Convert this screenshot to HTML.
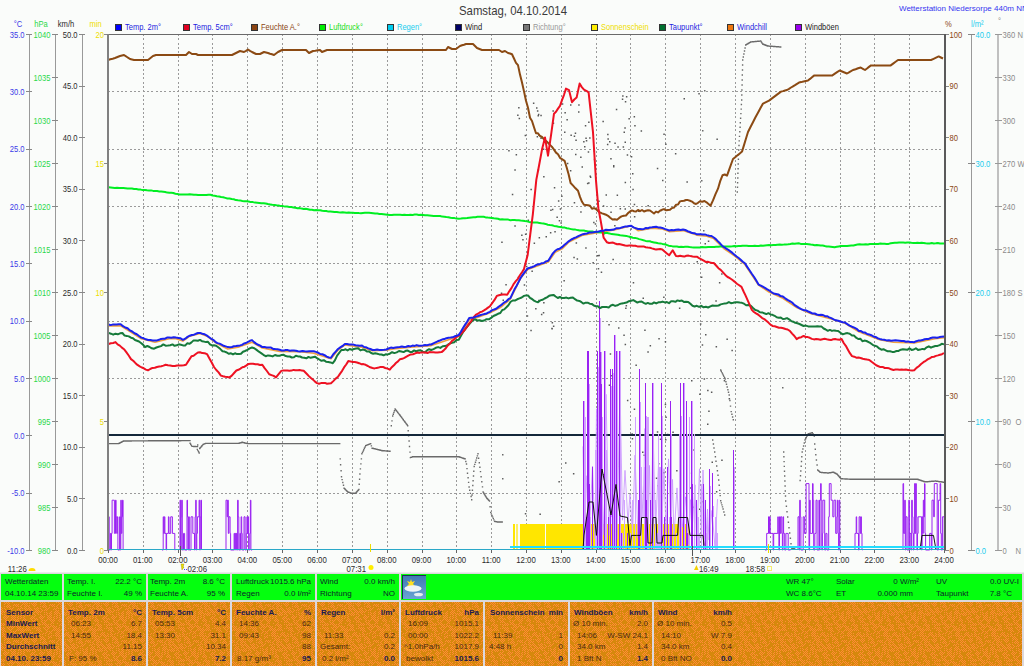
<!DOCTYPE html><html><head><meta charset="utf-8"><style>html,body{margin:0;padding:0;background:#fafcfa;overflow:hidden}svg{display:block}text{font-family:"Liberation Sans",sans-serif}</style></head><body>
<svg width="1024" height="666" viewBox="0 0 1024 666">
<rect x="0" y="0" width="1024" height="666" fill="#fafcfa"/>
<text transform="translate(513.0,15.0) scale(0.91,1)" font-size="12.5" fill="#3a3a3a" text-anchor="middle">Samstag, 04.10.2014</text>
<text x="899.0" y="11.0" font-size="8" fill="#3535f0" text-anchor="start">Wetterstation Niedersorpe 440m NN</text>
<rect x="115.5" y="24.5" width="6" height="6" fill="#0000ff" stroke="#333" stroke-width="1" shape-rendering="crispEdges"/>
<text transform="translate(125.0,29.8) scale(0.835,1)" font-size="9" fill="#1c1ce0" text-anchor="start">Temp. 2m°</text>
<rect x="183.5" y="24.5" width="6" height="6" fill="#e00020" stroke="#333" stroke-width="1" shape-rendering="crispEdges"/>
<text transform="translate(193.0,29.8) scale(0.835,1)" font-size="9" fill="#1c1ce0" text-anchor="start">Temp. 5cm°</text>
<rect x="251.5" y="24.5" width="6" height="6" fill="#8b4513" stroke="#333" stroke-width="1" shape-rendering="crispEdges"/>
<text transform="translate(261.0,29.8) scale(0.835,1)" font-size="9" fill="#8b4513" text-anchor="start">Feuchte A.°</text>
<rect x="319.5" y="24.5" width="6" height="6" fill="#00ee00" stroke="#333" stroke-width="1" shape-rendering="crispEdges"/>
<text transform="translate(329.0,29.8) scale(0.835,1)" font-size="9" fill="#22dd22" text-anchor="start">Luftdruck°</text>
<rect x="387.5" y="24.5" width="6" height="6" fill="#00ccee" stroke="#333" stroke-width="1" shape-rendering="crispEdges"/>
<text transform="translate(397.0,29.8) scale(0.835,1)" font-size="9" fill="#22ccee" text-anchor="start">Regen°</text>
<rect x="455.5" y="24.5" width="6" height="6" fill="#000066" stroke="#333" stroke-width="1" shape-rendering="crispEdges"/>
<text transform="translate(465.0,29.8) scale(0.835,1)" font-size="9" fill="#222" text-anchor="start">Wind</text>
<rect x="523.5" y="24.5" width="6" height="6" fill="#777" stroke="#333" stroke-width="1" shape-rendering="crispEdges"/>
<text transform="translate(533.0,29.8) scale(0.835,1)" font-size="9" fill="#999" text-anchor="start">Richtung°</text>
<rect x="591.5" y="24.5" width="6" height="6" fill="#ffee00" stroke="#333" stroke-width="1" shape-rendering="crispEdges"/>
<text transform="translate(601.0,29.8) scale(0.835,1)" font-size="9" fill="#eedd00" text-anchor="start">Sonnenschein</text>
<rect x="659.5" y="24.5" width="6" height="6" fill="#007030" stroke="#333" stroke-width="1" shape-rendering="crispEdges"/>
<text transform="translate(669.0,29.8) scale(0.835,1)" font-size="9" fill="#1c1ce0" text-anchor="start">Taupunkt°</text>
<rect x="727.5" y="24.5" width="6" height="6" fill="#ee7711" stroke="#333" stroke-width="1" shape-rendering="crispEdges"/>
<text transform="translate(737.0,29.8) scale(0.835,1)" font-size="9" fill="#1c1ce0" text-anchor="start">Windchill</text>
<rect x="795.5" y="24.5" width="6" height="6" fill="#9900ee" stroke="#333" stroke-width="1" shape-rendering="crispEdges"/>
<text transform="translate(805.0,29.8) scale(0.835,1)" font-size="9" fill="#222" text-anchor="start">Windböen</text>
<line x1="29.5" y1="34" x2="29.5" y2="550" stroke="#999" stroke-width="1" shape-rendering="crispEdges"/>
<line x1="26" y1="34.5" x2="32" y2="34.5" stroke="#888" stroke-width="1" shape-rendering="crispEdges"/>
<text transform="translate(24.5,37.6) scale(0.8,1)" font-size="9.5" fill="#3a3ae8" text-anchor="end">35.0</text>
<line x1="26" y1="91.5" x2="32" y2="91.5" stroke="#888" stroke-width="1" shape-rendering="crispEdges"/>
<text transform="translate(24.5,94.9) scale(0.8,1)" font-size="9.5" fill="#3a3ae8" text-anchor="end">30.0</text>
<line x1="26" y1="149.5" x2="32" y2="149.5" stroke="#888" stroke-width="1" shape-rendering="crispEdges"/>
<text transform="translate(24.5,152.3) scale(0.8,1)" font-size="9.5" fill="#3a3ae8" text-anchor="end">25.0</text>
<line x1="26" y1="206.5" x2="32" y2="206.5" stroke="#888" stroke-width="1" shape-rendering="crispEdges"/>
<text transform="translate(24.5,209.6) scale(0.8,1)" font-size="9.5" fill="#3a3ae8" text-anchor="end">20.0</text>
<line x1="26" y1="263.5" x2="32" y2="263.5" stroke="#888" stroke-width="1" shape-rendering="crispEdges"/>
<text transform="translate(24.5,266.9) scale(0.8,1)" font-size="9.5" fill="#3a3ae8" text-anchor="end">15.0</text>
<line x1="26" y1="321.5" x2="32" y2="321.5" stroke="#888" stroke-width="1" shape-rendering="crispEdges"/>
<text transform="translate(24.5,324.3) scale(0.8,1)" font-size="9.5" fill="#3a3ae8" text-anchor="end">10.0</text>
<line x1="26" y1="378.5" x2="32" y2="378.5" stroke="#888" stroke-width="1" shape-rendering="crispEdges"/>
<text transform="translate(24.5,381.6) scale(0.8,1)" font-size="9.5" fill="#3a3ae8" text-anchor="end">5.0</text>
<line x1="26" y1="435.5" x2="32" y2="435.5" stroke="#888" stroke-width="1" shape-rendering="crispEdges"/>
<text transform="translate(24.5,438.9) scale(0.8,1)" font-size="9.5" fill="#3a3ae8" text-anchor="end">0.0</text>
<line x1="26" y1="493.5" x2="32" y2="493.5" stroke="#888" stroke-width="1" shape-rendering="crispEdges"/>
<text transform="translate(24.5,496.3) scale(0.8,1)" font-size="9.5" fill="#3a3ae8" text-anchor="end">-5.0</text>
<line x1="26" y1="550.5" x2="32" y2="550.5" stroke="#888" stroke-width="1" shape-rendering="crispEdges"/>
<text transform="translate(24.5,553.6) scale(0.8,1)" font-size="9.5" fill="#3a3ae8" text-anchor="end">-10.0</text>
<line x1="55.5" y1="34" x2="55.5" y2="550" stroke="#999" stroke-width="1" shape-rendering="crispEdges"/>
<line x1="52" y1="34.5" x2="58" y2="34.5" stroke="#888" stroke-width="1" shape-rendering="crispEdges"/>
<text transform="translate(50.5,37.6) scale(0.8,1)" font-size="9.5" fill="#2ad84a" text-anchor="end">1040</text>
<line x1="52" y1="77.5" x2="58" y2="77.5" stroke="#888" stroke-width="1" shape-rendering="crispEdges"/>
<text transform="translate(50.5,80.6) scale(0.8,1)" font-size="9.5" fill="#2ad84a" text-anchor="end">1035</text>
<line x1="52" y1="120.5" x2="58" y2="120.5" stroke="#888" stroke-width="1" shape-rendering="crispEdges"/>
<text transform="translate(50.5,123.6) scale(0.8,1)" font-size="9.5" fill="#2ad84a" text-anchor="end">1030</text>
<line x1="52" y1="163.5" x2="58" y2="163.5" stroke="#888" stroke-width="1" shape-rendering="crispEdges"/>
<text transform="translate(50.5,166.6) scale(0.8,1)" font-size="9.5" fill="#2ad84a" text-anchor="end">1025</text>
<line x1="52" y1="206.5" x2="58" y2="206.5" stroke="#888" stroke-width="1" shape-rendering="crispEdges"/>
<text transform="translate(50.5,209.6) scale(0.8,1)" font-size="9.5" fill="#2ad84a" text-anchor="end">1020</text>
<line x1="52" y1="249.5" x2="58" y2="249.5" stroke="#888" stroke-width="1" shape-rendering="crispEdges"/>
<text transform="translate(50.5,252.6) scale(0.8,1)" font-size="9.5" fill="#2ad84a" text-anchor="end">1015</text>
<line x1="52" y1="292.5" x2="58" y2="292.5" stroke="#888" stroke-width="1" shape-rendering="crispEdges"/>
<text transform="translate(50.5,295.6) scale(0.8,1)" font-size="9.5" fill="#2ad84a" text-anchor="end">1010</text>
<line x1="52" y1="335.5" x2="58" y2="335.5" stroke="#888" stroke-width="1" shape-rendering="crispEdges"/>
<text transform="translate(50.5,338.6) scale(0.8,1)" font-size="9.5" fill="#2ad84a" text-anchor="end">1005</text>
<line x1="52" y1="378.5" x2="58" y2="378.5" stroke="#888" stroke-width="1" shape-rendering="crispEdges"/>
<text transform="translate(50.5,381.6) scale(0.8,1)" font-size="9.5" fill="#2ad84a" text-anchor="end">1000</text>
<line x1="52" y1="421.5" x2="58" y2="421.5" stroke="#888" stroke-width="1" shape-rendering="crispEdges"/>
<text transform="translate(50.5,424.6) scale(0.8,1)" font-size="9.5" fill="#2ad84a" text-anchor="end">995</text>
<line x1="52" y1="464.5" x2="58" y2="464.5" stroke="#888" stroke-width="1" shape-rendering="crispEdges"/>
<text transform="translate(50.5,467.6) scale(0.8,1)" font-size="9.5" fill="#2ad84a" text-anchor="end">990</text>
<line x1="52" y1="507.5" x2="58" y2="507.5" stroke="#888" stroke-width="1" shape-rendering="crispEdges"/>
<text transform="translate(50.5,510.6) scale(0.8,1)" font-size="9.5" fill="#2ad84a" text-anchor="end">985</text>
<line x1="52" y1="550.5" x2="58" y2="550.5" stroke="#888" stroke-width="1" shape-rendering="crispEdges"/>
<text transform="translate(50.5,553.6) scale(0.8,1)" font-size="9.5" fill="#2ad84a" text-anchor="end">980</text>
<line x1="82.5" y1="34" x2="82.5" y2="550" stroke="#999" stroke-width="1" shape-rendering="crispEdges"/>
<line x1="79" y1="34.5" x2="85" y2="34.5" stroke="#888" stroke-width="1" shape-rendering="crispEdges"/>
<text transform="translate(77.5,37.6) scale(0.8,1)" font-size="9.5" fill="#2a2a2a" text-anchor="end">50.0</text>
<line x1="79" y1="86.5" x2="85" y2="86.5" stroke="#888" stroke-width="1" shape-rendering="crispEdges"/>
<text transform="translate(77.5,89.2) scale(0.8,1)" font-size="9.5" fill="#2a2a2a" text-anchor="end">45.0</text>
<line x1="79" y1="137.5" x2="85" y2="137.5" stroke="#888" stroke-width="1" shape-rendering="crispEdges"/>
<text transform="translate(77.5,140.8) scale(0.8,1)" font-size="9.5" fill="#2a2a2a" text-anchor="end">40.0</text>
<line x1="79" y1="189.5" x2="85" y2="189.5" stroke="#888" stroke-width="1" shape-rendering="crispEdges"/>
<text transform="translate(77.5,192.4) scale(0.8,1)" font-size="9.5" fill="#2a2a2a" text-anchor="end">35.0</text>
<line x1="79" y1="240.5" x2="85" y2="240.5" stroke="#888" stroke-width="1" shape-rendering="crispEdges"/>
<text transform="translate(77.5,244.0) scale(0.8,1)" font-size="9.5" fill="#2a2a2a" text-anchor="end">30.0</text>
<line x1="79" y1="292.5" x2="85" y2="292.5" stroke="#888" stroke-width="1" shape-rendering="crispEdges"/>
<text transform="translate(77.5,295.6) scale(0.8,1)" font-size="9.5" fill="#2a2a2a" text-anchor="end">25.0</text>
<line x1="79" y1="344.5" x2="85" y2="344.5" stroke="#888" stroke-width="1" shape-rendering="crispEdges"/>
<text transform="translate(77.5,347.2) scale(0.8,1)" font-size="9.5" fill="#2a2a2a" text-anchor="end">20.0</text>
<line x1="79" y1="395.5" x2="85" y2="395.5" stroke="#888" stroke-width="1" shape-rendering="crispEdges"/>
<text transform="translate(77.5,398.8) scale(0.8,1)" font-size="9.5" fill="#2a2a2a" text-anchor="end">15.0</text>
<line x1="79" y1="447.5" x2="85" y2="447.5" stroke="#888" stroke-width="1" shape-rendering="crispEdges"/>
<text transform="translate(77.5,450.4) scale(0.8,1)" font-size="9.5" fill="#2a2a2a" text-anchor="end">10.0</text>
<line x1="79" y1="498.5" x2="85" y2="498.5" stroke="#888" stroke-width="1" shape-rendering="crispEdges"/>
<text transform="translate(77.5,502.0) scale(0.8,1)" font-size="9.5" fill="#2a2a2a" text-anchor="end">5.0</text>
<line x1="79" y1="550.5" x2="85" y2="550.5" stroke="#888" stroke-width="1" shape-rendering="crispEdges"/>
<text transform="translate(77.5,553.6) scale(0.8,1)" font-size="9.5" fill="#2a2a2a" text-anchor="end">0.0</text>
<text transform="translate(18.0,27.0) scale(0.8,1)" font-size="9.5" fill="#3a3ae8" text-anchor="middle">°C</text>
<text transform="translate(41.0,27.0) scale(0.8,1)" font-size="9.5" fill="#2ad84a" text-anchor="middle">hPa</text>
<text transform="translate(66.0,27.0) scale(0.8,1)" font-size="9.5" fill="#2a2a2a" text-anchor="middle">km/h</text>
<text transform="translate(95.5,27.0) scale(0.8,1)" font-size="9.5" fill="#eedd00" text-anchor="middle">min</text>
<text transform="translate(104.0,37.6) scale(0.8,1)" font-size="9.5" fill="#eedd00" text-anchor="end">20</text>
<line x1="104" y1="34.5" x2="108" y2="34.5" stroke="#888" stroke-width="1" shape-rendering="crispEdges"/>
<text transform="translate(104.0,166.6) scale(0.8,1)" font-size="9.5" fill="#eedd00" text-anchor="end">15</text>
<line x1="104" y1="163.5" x2="108" y2="163.5" stroke="#888" stroke-width="1" shape-rendering="crispEdges"/>
<text transform="translate(104.0,295.6) scale(0.8,1)" font-size="9.5" fill="#eedd00" text-anchor="end">10</text>
<line x1="104" y1="292.5" x2="108" y2="292.5" stroke="#888" stroke-width="1" shape-rendering="crispEdges"/>
<text transform="translate(104.0,424.6) scale(0.8,1)" font-size="9.5" fill="#eedd00" text-anchor="end">5</text>
<line x1="104" y1="421.5" x2="108" y2="421.5" stroke="#888" stroke-width="1" shape-rendering="crispEdges"/>
<text transform="translate(104.0,553.6) scale(0.8,1)" font-size="9.5" fill="#eedd00" text-anchor="end">0</text>
<line x1="104" y1="550.5" x2="108" y2="550.5" stroke="#888" stroke-width="1" shape-rendering="crispEdges"/>
<line x1="944" y1="34.5" x2="949" y2="34.5" stroke="#888" stroke-width="1" shape-rendering="crispEdges"/>
<text transform="translate(949.5,37.6) scale(0.8,1)" font-size="9.5" fill="#8b4513" text-anchor="start">100</text>
<line x1="944" y1="86.5" x2="949" y2="86.5" stroke="#888" stroke-width="1" shape-rendering="crispEdges"/>
<text transform="translate(949.5,89.2) scale(0.8,1)" font-size="9.5" fill="#8b4513" text-anchor="start">90</text>
<line x1="944" y1="137.5" x2="949" y2="137.5" stroke="#888" stroke-width="1" shape-rendering="crispEdges"/>
<text transform="translate(949.5,140.8) scale(0.8,1)" font-size="9.5" fill="#8b4513" text-anchor="start">80</text>
<line x1="944" y1="189.5" x2="949" y2="189.5" stroke="#888" stroke-width="1" shape-rendering="crispEdges"/>
<text transform="translate(949.5,192.4) scale(0.8,1)" font-size="9.5" fill="#8b4513" text-anchor="start">70</text>
<line x1="944" y1="240.5" x2="949" y2="240.5" stroke="#888" stroke-width="1" shape-rendering="crispEdges"/>
<text transform="translate(949.5,244.0) scale(0.8,1)" font-size="9.5" fill="#8b4513" text-anchor="start">60</text>
<line x1="944" y1="292.5" x2="949" y2="292.5" stroke="#888" stroke-width="1" shape-rendering="crispEdges"/>
<text transform="translate(949.5,295.6) scale(0.8,1)" font-size="9.5" fill="#8b4513" text-anchor="start">50</text>
<line x1="944" y1="344.5" x2="949" y2="344.5" stroke="#888" stroke-width="1" shape-rendering="crispEdges"/>
<text transform="translate(949.5,347.2) scale(0.8,1)" font-size="9.5" fill="#8b4513" text-anchor="start">40</text>
<line x1="944" y1="395.5" x2="949" y2="395.5" stroke="#888" stroke-width="1" shape-rendering="crispEdges"/>
<text transform="translate(949.5,398.8) scale(0.8,1)" font-size="9.5" fill="#8b4513" text-anchor="start">30</text>
<line x1="944" y1="447.5" x2="949" y2="447.5" stroke="#888" stroke-width="1" shape-rendering="crispEdges"/>
<text transform="translate(949.5,450.4) scale(0.8,1)" font-size="9.5" fill="#8b4513" text-anchor="start">20</text>
<line x1="944" y1="498.5" x2="949" y2="498.5" stroke="#888" stroke-width="1" shape-rendering="crispEdges"/>
<text transform="translate(949.5,502.0) scale(0.8,1)" font-size="9.5" fill="#8b4513" text-anchor="start">10</text>
<line x1="944" y1="550.5" x2="949" y2="550.5" stroke="#888" stroke-width="1" shape-rendering="crispEdges"/>
<text transform="translate(949.5,553.6) scale(0.8,1)" font-size="9.5" fill="#8b4513" text-anchor="start">0</text>
<text transform="translate(945.0,27.0) scale(0.8,1)" font-size="9.5" fill="#8b4513" text-anchor="start">%</text>
<line x1="971.5" y1="34" x2="971.5" y2="550" stroke="#999" stroke-width="1" shape-rendering="crispEdges"/>
<line x1="968" y1="34.5" x2="975" y2="34.5" stroke="#888" stroke-width="1" shape-rendering="crispEdges"/>
<text transform="translate(975.5,37.6) scale(0.8,1)" font-size="9.5" fill="#22ccee" text-anchor="start">40.0</text>
<line x1="968" y1="163.5" x2="975" y2="163.5" stroke="#888" stroke-width="1" shape-rendering="crispEdges"/>
<text transform="translate(975.5,166.6) scale(0.8,1)" font-size="9.5" fill="#22ccee" text-anchor="start">30.0</text>
<line x1="968" y1="292.5" x2="975" y2="292.5" stroke="#888" stroke-width="1" shape-rendering="crispEdges"/>
<text transform="translate(975.5,295.6) scale(0.8,1)" font-size="9.5" fill="#22ccee" text-anchor="start">20.0</text>
<line x1="968" y1="421.5" x2="975" y2="421.5" stroke="#888" stroke-width="1" shape-rendering="crispEdges"/>
<text transform="translate(975.5,424.6) scale(0.8,1)" font-size="9.5" fill="#22ccee" text-anchor="start">10.0</text>
<line x1="968" y1="550.5" x2="975" y2="550.5" stroke="#888" stroke-width="1" shape-rendering="crispEdges"/>
<text transform="translate(975.5,553.6) scale(0.8,1)" font-size="9.5" fill="#22ccee" text-anchor="start">0.0</text>
<text transform="translate(971.0,27.0) scale(0.8,1)" font-size="9.5" fill="#22ccee" text-anchor="start">l/m²</text>
<line x1="998" y1="34" x2="998" y2="550" stroke="#c0c0c0" stroke-width="2" shape-rendering="crispEdges"/>
<line x1="995" y1="34.5" x2="1002" y2="34.5" stroke="#999" stroke-width="1" shape-rendering="crispEdges"/>
<text transform="translate(1002.5,37.6) scale(0.8,1)" font-size="9.5" fill="#8a8a8a" text-anchor="start">360</text>
<text transform="translate(1017.5,37.6) scale(0.8,1)" font-size="9.5" fill="#8a8a8a" text-anchor="start">N</text>
<line x1="995" y1="77.5" x2="1002" y2="77.5" stroke="#999" stroke-width="1" shape-rendering="crispEdges"/>
<text transform="translate(1002.5,80.6) scale(0.8,1)" font-size="9.5" fill="#8a8a8a" text-anchor="start">330</text>
<line x1="995" y1="120.5" x2="1002" y2="120.5" stroke="#999" stroke-width="1" shape-rendering="crispEdges"/>
<text transform="translate(1002.5,123.6) scale(0.8,1)" font-size="9.5" fill="#8a8a8a" text-anchor="start">300</text>
<line x1="995" y1="163.5" x2="1002" y2="163.5" stroke="#999" stroke-width="1" shape-rendering="crispEdges"/>
<text transform="translate(1002.5,166.6) scale(0.8,1)" font-size="9.5" fill="#8a8a8a" text-anchor="start">270</text>
<text transform="translate(1017.5,166.6) scale(0.8,1)" font-size="9.5" fill="#8a8a8a" text-anchor="start">W</text>
<line x1="995" y1="206.5" x2="1002" y2="206.5" stroke="#999" stroke-width="1" shape-rendering="crispEdges"/>
<text transform="translate(1002.5,209.6) scale(0.8,1)" font-size="9.5" fill="#8a8a8a" text-anchor="start">240</text>
<line x1="995" y1="249.5" x2="1002" y2="249.5" stroke="#999" stroke-width="1" shape-rendering="crispEdges"/>
<text transform="translate(1002.5,252.6) scale(0.8,1)" font-size="9.5" fill="#8a8a8a" text-anchor="start">210</text>
<line x1="995" y1="292.5" x2="1002" y2="292.5" stroke="#999" stroke-width="1" shape-rendering="crispEdges"/>
<text transform="translate(1002.5,295.6) scale(0.8,1)" font-size="9.5" fill="#8a8a8a" text-anchor="start">180</text>
<text transform="translate(1017.5,295.6) scale(0.8,1)" font-size="9.5" fill="#8a8a8a" text-anchor="start">S</text>
<line x1="995" y1="335.5" x2="1002" y2="335.5" stroke="#999" stroke-width="1" shape-rendering="crispEdges"/>
<text transform="translate(1002.5,338.6) scale(0.8,1)" font-size="9.5" fill="#8a8a8a" text-anchor="start">150</text>
<line x1="995" y1="378.5" x2="1002" y2="378.5" stroke="#999" stroke-width="1" shape-rendering="crispEdges"/>
<text transform="translate(1002.5,381.6) scale(0.8,1)" font-size="9.5" fill="#8a8a8a" text-anchor="start">120</text>
<line x1="995" y1="421.5" x2="1002" y2="421.5" stroke="#999" stroke-width="1" shape-rendering="crispEdges"/>
<text transform="translate(1002.5,424.6) scale(0.8,1)" font-size="9.5" fill="#8a8a8a" text-anchor="start">90</text>
<text transform="translate(1015.5,424.6) scale(0.8,1)" font-size="9.5" fill="#8a8a8a" text-anchor="start">O</text>
<line x1="995" y1="464.5" x2="1002" y2="464.5" stroke="#999" stroke-width="1" shape-rendering="crispEdges"/>
<text transform="translate(1002.5,467.6) scale(0.8,1)" font-size="9.5" fill="#8a8a8a" text-anchor="start">60</text>
<line x1="995" y1="507.5" x2="1002" y2="507.5" stroke="#999" stroke-width="1" shape-rendering="crispEdges"/>
<text transform="translate(1002.5,510.6) scale(0.8,1)" font-size="9.5" fill="#8a8a8a" text-anchor="start">30</text>
<line x1="995" y1="550.5" x2="1002" y2="550.5" stroke="#999" stroke-width="1" shape-rendering="crispEdges"/>
<text transform="translate(1002.5,553.6) scale(0.8,1)" font-size="9.5" fill="#8a8a8a" text-anchor="start">0</text>
<text transform="translate(1015.5,553.6) scale(0.8,1)" font-size="9.5" fill="#8a8a8a" text-anchor="start">N</text>
<text transform="translate(998.0,24.0) scale(0.8,1)" font-size="9.5" fill="#8a8a8a" text-anchor="start">°</text>
<line x1="143.5" y1="34" x2="143.5" y2="550" stroke="#9a9a9a" stroke-width="1" shape-rendering="crispEdges" stroke-dasharray="2,2.33"/>
<line x1="178.5" y1="34" x2="178.5" y2="550" stroke="#9a9a9a" stroke-width="1" shape-rendering="crispEdges" stroke-dasharray="2,2.33"/>
<line x1="212.5" y1="34" x2="212.5" y2="550" stroke="#9a9a9a" stroke-width="1" shape-rendering="crispEdges" stroke-dasharray="2,2.33"/>
<line x1="247.5" y1="34" x2="247.5" y2="550" stroke="#9a9a9a" stroke-width="1" shape-rendering="crispEdges" stroke-dasharray="2,2.33"/>
<line x1="282.5" y1="34" x2="282.5" y2="550" stroke="#9a9a9a" stroke-width="1" shape-rendering="crispEdges" stroke-dasharray="2,2.33"/>
<line x1="317.5" y1="34" x2="317.5" y2="550" stroke="#9a9a9a" stroke-width="1" shape-rendering="crispEdges" stroke-dasharray="2,2.33"/>
<line x1="352.5" y1="34" x2="352.5" y2="550" stroke="#9a9a9a" stroke-width="1" shape-rendering="crispEdges" stroke-dasharray="2,2.33"/>
<line x1="387.5" y1="34" x2="387.5" y2="550" stroke="#9a9a9a" stroke-width="1" shape-rendering="crispEdges" stroke-dasharray="2,2.33"/>
<line x1="422.5" y1="34" x2="422.5" y2="550" stroke="#9a9a9a" stroke-width="1" shape-rendering="crispEdges" stroke-dasharray="2,2.33"/>
<line x1="456.5" y1="34" x2="456.5" y2="550" stroke="#9a9a9a" stroke-width="1" shape-rendering="crispEdges" stroke-dasharray="2,2.33"/>
<line x1="491.5" y1="34" x2="491.5" y2="550" stroke="#9a9a9a" stroke-width="1" shape-rendering="crispEdges" stroke-dasharray="2,2.33"/>
<line x1="526.5" y1="34" x2="526.5" y2="550" stroke="#9a9a9a" stroke-width="1" shape-rendering="crispEdges" stroke-dasharray="2,2.33"/>
<line x1="561.5" y1="34" x2="561.5" y2="550" stroke="#9a9a9a" stroke-width="1" shape-rendering="crispEdges" stroke-dasharray="2,2.33"/>
<line x1="596.5" y1="34" x2="596.5" y2="550" stroke="#9a9a9a" stroke-width="1" shape-rendering="crispEdges" stroke-dasharray="2,2.33"/>
<line x1="630.5" y1="34" x2="630.5" y2="550" stroke="#9a9a9a" stroke-width="1" shape-rendering="crispEdges" stroke-dasharray="2,2.33"/>
<line x1="665.5" y1="34" x2="665.5" y2="550" stroke="#9a9a9a" stroke-width="1" shape-rendering="crispEdges" stroke-dasharray="2,2.33"/>
<line x1="700.5" y1="34" x2="700.5" y2="550" stroke="#9a9a9a" stroke-width="1" shape-rendering="crispEdges" stroke-dasharray="2,2.33"/>
<line x1="735.5" y1="34" x2="735.5" y2="550" stroke="#9a9a9a" stroke-width="1" shape-rendering="crispEdges" stroke-dasharray="2,2.33"/>
<line x1="770.5" y1="34" x2="770.5" y2="550" stroke="#9a9a9a" stroke-width="1" shape-rendering="crispEdges" stroke-dasharray="2,2.33"/>
<line x1="805.5" y1="34" x2="805.5" y2="550" stroke="#9a9a9a" stroke-width="1" shape-rendering="crispEdges" stroke-dasharray="2,2.33"/>
<line x1="840.5" y1="34" x2="840.5" y2="550" stroke="#9a9a9a" stroke-width="1" shape-rendering="crispEdges" stroke-dasharray="2,2.33"/>
<line x1="874.5" y1="34" x2="874.5" y2="550" stroke="#9a9a9a" stroke-width="1" shape-rendering="crispEdges" stroke-dasharray="2,2.33"/>
<line x1="909.5" y1="34" x2="909.5" y2="550" stroke="#9a9a9a" stroke-width="1" shape-rendering="crispEdges" stroke-dasharray="2,2.33"/>
<line x1="108" y1="91.5" x2="944" y2="91.5" stroke="#9a9a9a" stroke-width="1" shape-rendering="crispEdges" stroke-dasharray="2,2.33"/>
<line x1="108" y1="149.5" x2="944" y2="149.5" stroke="#9a9a9a" stroke-width="1" shape-rendering="crispEdges" stroke-dasharray="2,2.33"/>
<line x1="108" y1="206.5" x2="944" y2="206.5" stroke="#9a9a9a" stroke-width="1" shape-rendering="crispEdges" stroke-dasharray="2,2.33"/>
<line x1="108" y1="263.5" x2="944" y2="263.5" stroke="#9a9a9a" stroke-width="1" shape-rendering="crispEdges" stroke-dasharray="2,2.33"/>
<line x1="108" y1="321.5" x2="944" y2="321.5" stroke="#9a9a9a" stroke-width="1" shape-rendering="crispEdges" stroke-dasharray="2,2.33"/>
<line x1="108" y1="378.5" x2="944" y2="378.5" stroke="#9a9a9a" stroke-width="1" shape-rendering="crispEdges" stroke-dasharray="2,2.33"/>
<line x1="108" y1="435.5" x2="944" y2="435.5" stroke="#9a9a9a" stroke-width="1" shape-rendering="crispEdges" stroke-dasharray="2,2.33"/>
<line x1="108" y1="493.5" x2="944" y2="493.5" stroke="#9a9a9a" stroke-width="1" shape-rendering="crispEdges" stroke-dasharray="2,2.33"/>
<line x1="108.5" y1="550" x2="108.5" y2="553" stroke="#666" stroke-width="1" shape-rendering="crispEdges"/>
<text transform="translate(108.0,563.0) scale(0.87,1)" font-size="9" fill="#2a2a2a" text-anchor="middle">00:00</text>
<line x1="143.5" y1="550" x2="143.5" y2="553" stroke="#666" stroke-width="1" shape-rendering="crispEdges"/>
<text transform="translate(142.8,563.0) scale(0.87,1)" font-size="9" fill="#2a2a2a" text-anchor="middle">01:00</text>
<line x1="178.5" y1="550" x2="178.5" y2="553" stroke="#666" stroke-width="1" shape-rendering="crispEdges"/>
<text transform="translate(177.7,563.0) scale(0.87,1)" font-size="9" fill="#2a2a2a" text-anchor="middle">02:00</text>
<line x1="212.5" y1="550" x2="212.5" y2="553" stroke="#666" stroke-width="1" shape-rendering="crispEdges"/>
<text transform="translate(212.5,563.0) scale(0.87,1)" font-size="9" fill="#2a2a2a" text-anchor="middle">03:00</text>
<line x1="247.5" y1="550" x2="247.5" y2="553" stroke="#666" stroke-width="1" shape-rendering="crispEdges"/>
<text transform="translate(247.3,563.0) scale(0.87,1)" font-size="9" fill="#2a2a2a" text-anchor="middle">04:00</text>
<line x1="282.5" y1="550" x2="282.5" y2="553" stroke="#666" stroke-width="1" shape-rendering="crispEdges"/>
<text transform="translate(282.2,563.0) scale(0.87,1)" font-size="9" fill="#2a2a2a" text-anchor="middle">05:00</text>
<line x1="317.5" y1="550" x2="317.5" y2="553" stroke="#666" stroke-width="1" shape-rendering="crispEdges"/>
<text transform="translate(317.0,563.0) scale(0.87,1)" font-size="9" fill="#2a2a2a" text-anchor="middle">06:00</text>
<line x1="352.5" y1="550" x2="352.5" y2="553" stroke="#666" stroke-width="1" shape-rendering="crispEdges"/>
<text transform="translate(351.8,563.0) scale(0.87,1)" font-size="9" fill="#2a2a2a" text-anchor="middle">07:00</text>
<line x1="387.5" y1="550" x2="387.5" y2="553" stroke="#666" stroke-width="1" shape-rendering="crispEdges"/>
<text transform="translate(386.7,563.0) scale(0.87,1)" font-size="9" fill="#2a2a2a" text-anchor="middle">08:00</text>
<line x1="422.5" y1="550" x2="422.5" y2="553" stroke="#666" stroke-width="1" shape-rendering="crispEdges"/>
<text transform="translate(421.5,563.0) scale(0.87,1)" font-size="9" fill="#2a2a2a" text-anchor="middle">09:00</text>
<line x1="456.5" y1="550" x2="456.5" y2="553" stroke="#666" stroke-width="1" shape-rendering="crispEdges"/>
<text transform="translate(456.3,563.0) scale(0.87,1)" font-size="9" fill="#2a2a2a" text-anchor="middle">10:00</text>
<line x1="491.5" y1="550" x2="491.5" y2="553" stroke="#666" stroke-width="1" shape-rendering="crispEdges"/>
<text transform="translate(491.2,563.0) scale(0.87,1)" font-size="9" fill="#2a2a2a" text-anchor="middle">11:00</text>
<line x1="526.5" y1="550" x2="526.5" y2="553" stroke="#666" stroke-width="1" shape-rendering="crispEdges"/>
<text transform="translate(526.0,563.0) scale(0.87,1)" font-size="9" fill="#2a2a2a" text-anchor="middle">12:00</text>
<line x1="561.5" y1="550" x2="561.5" y2="553" stroke="#666" stroke-width="1" shape-rendering="crispEdges"/>
<text transform="translate(560.8,563.0) scale(0.87,1)" font-size="9" fill="#2a2a2a" text-anchor="middle">13:00</text>
<line x1="596.5" y1="550" x2="596.5" y2="553" stroke="#666" stroke-width="1" shape-rendering="crispEdges"/>
<text transform="translate(595.7,563.0) scale(0.87,1)" font-size="9" fill="#2a2a2a" text-anchor="middle">14:00</text>
<line x1="630.5" y1="550" x2="630.5" y2="553" stroke="#666" stroke-width="1" shape-rendering="crispEdges"/>
<text transform="translate(630.5,563.0) scale(0.87,1)" font-size="9" fill="#2a2a2a" text-anchor="middle">15:00</text>
<line x1="665.5" y1="550" x2="665.5" y2="553" stroke="#666" stroke-width="1" shape-rendering="crispEdges"/>
<text transform="translate(665.3,563.0) scale(0.87,1)" font-size="9" fill="#2a2a2a" text-anchor="middle">16:00</text>
<line x1="700.5" y1="550" x2="700.5" y2="553" stroke="#666" stroke-width="1" shape-rendering="crispEdges"/>
<text transform="translate(700.2,563.0) scale(0.87,1)" font-size="9" fill="#2a2a2a" text-anchor="middle">17:00</text>
<line x1="735.5" y1="550" x2="735.5" y2="553" stroke="#666" stroke-width="1" shape-rendering="crispEdges"/>
<text transform="translate(735.0,563.0) scale(0.87,1)" font-size="9" fill="#2a2a2a" text-anchor="middle">18:00</text>
<line x1="770.5" y1="550" x2="770.5" y2="553" stroke="#666" stroke-width="1" shape-rendering="crispEdges"/>
<text transform="translate(769.8,563.0) scale(0.87,1)" font-size="9" fill="#2a2a2a" text-anchor="middle">19:00</text>
<line x1="805.5" y1="550" x2="805.5" y2="553" stroke="#666" stroke-width="1" shape-rendering="crispEdges"/>
<text transform="translate(804.7,563.0) scale(0.87,1)" font-size="9" fill="#2a2a2a" text-anchor="middle">20:00</text>
<line x1="840.5" y1="550" x2="840.5" y2="553" stroke="#666" stroke-width="1" shape-rendering="crispEdges"/>
<text transform="translate(839.5,563.0) scale(0.87,1)" font-size="9" fill="#2a2a2a" text-anchor="middle">21:00</text>
<line x1="874.5" y1="550" x2="874.5" y2="553" stroke="#666" stroke-width="1" shape-rendering="crispEdges"/>
<text transform="translate(874.3,563.0) scale(0.87,1)" font-size="9" fill="#2a2a2a" text-anchor="middle">22:00</text>
<line x1="909.5" y1="550" x2="909.5" y2="553" stroke="#666" stroke-width="1" shape-rendering="crispEdges"/>
<text transform="translate(909.2,563.0) scale(0.87,1)" font-size="9" fill="#2a2a2a" text-anchor="middle">23:00</text>
<line x1="944.5" y1="550" x2="944.5" y2="553" stroke="#666" stroke-width="1" shape-rendering="crispEdges"/>
<text transform="translate(944.0,563.0) scale(0.87,1)" font-size="9" fill="#2a2a2a" text-anchor="middle">24:00</text>
<g fill="#ffe600" shape-rendering="crispEdges">
<rect x="513" y="524" width="2" height="26"/><rect x="516" y="524" width="2" height="26" opacity="0.6"/>
<rect x="520" y="524" width="25" height="26"/><rect x="546" y="524" width="144" height="26"/>
</g>
<path d="M502,454h1.5v1.5h-1.5zM502,478h1.5v1.5h-1.5zM782,387h1.5v1.5h-1.5zM704,90h1.5v1.5h-1.5zM702,130h1.5v1.5h-1.5zM701,180h1.5v1.5h-1.5zM703,230h1.5v1.5h-1.5zM108.0,442.9h1.4v1.4h-1.4zM108.6,442.9h1.4v1.4h-1.4zM109.2,442.9h1.4v1.4h-1.4zM109.7,442.9h1.4v1.4h-1.4zM110.3,442.9h1.4v1.4h-1.4zM110.9,442.9h1.4v1.4h-1.4zM111.5,442.9h1.4v1.4h-1.4zM112.1,442.9h1.4v1.4h-1.4zM112.7,442.9h1.4v1.4h-1.4zM113.2,442.9h1.4v1.4h-1.4zM113.8,442.9h1.4v1.4h-1.4zM114.4,442.9h1.4v1.4h-1.4zM115.0,442.9h1.4v1.4h-1.4zM115.6,442.9h1.4v1.4h-1.4zM116.2,442.9h1.4v1.4h-1.4zM116.7,442.9h1.4v1.4h-1.4zM117.3,442.9h1.4v1.4h-1.4zM117.9,442.9h1.4v1.4h-1.4zM118.5,442.6h1.4v1.4h-1.4zM119.2,442.3h1.4v1.4h-1.4zM119.8,441.9h1.4v1.4h-1.4zM120.5,441.6h1.4v1.4h-1.4zM121.1,441.3h1.4v1.4h-1.4zM121.7,440.9h1.4v1.4h-1.4zM122.4,440.6h1.4v1.4h-1.4zM123.0,440.3h1.4v1.4h-1.4zM123.6,440.3h1.4v1.4h-1.4zM124.2,440.3h1.4v1.4h-1.4zM124.7,440.3h1.4v1.4h-1.4zM125.3,440.3h1.4v1.4h-1.4zM125.9,440.3h1.4v1.4h-1.4zM126.5,440.3h1.4v1.4h-1.4zM127.1,440.3h1.4v1.4h-1.4zM127.6,440.3h1.4v1.4h-1.4zM128.2,440.3h1.4v1.4h-1.4zM128.8,440.3h1.4v1.4h-1.4zM129.4,440.3h1.4v1.4h-1.4zM130.0,440.3h1.4v1.4h-1.4zM130.5,440.3h1.4v1.4h-1.4zM131.1,440.2h1.4v1.4h-1.4zM131.7,440.2h1.4v1.4h-1.4zM132.3,440.2h1.4v1.4h-1.4zM132.9,440.2h1.4v1.4h-1.4zM133.4,440.2h1.4v1.4h-1.4zM134.0,440.2h1.4v1.4h-1.4zM134.6,440.2h1.4v1.4h-1.4zM135.2,440.2h1.4v1.4h-1.4zM135.8,440.2h1.4v1.4h-1.4zM136.3,440.2h1.4v1.4h-1.4zM136.9,440.2h1.4v1.4h-1.4zM137.5,440.2h1.4v1.4h-1.4zM138.1,440.2h1.4v1.4h-1.4zM138.7,440.2h1.4v1.4h-1.4zM139.2,440.2h1.4v1.4h-1.4zM139.8,440.2h1.4v1.4h-1.4zM140.4,440.2h1.4v1.4h-1.4zM141.0,440.2h1.4v1.4h-1.4zM141.6,440.2h1.4v1.4h-1.4zM142.2,440.2h1.4v1.4h-1.4zM142.7,440.2h1.4v1.4h-1.4zM143.3,440.2h1.4v1.4h-1.4zM143.9,440.2h1.4v1.4h-1.4zM144.5,440.2h1.4v1.4h-1.4zM145.1,440.2h1.4v1.4h-1.4zM145.6,440.2h1.4v1.4h-1.4zM146.2,440.2h1.4v1.4h-1.4zM146.8,440.2h1.4v1.4h-1.4zM147.4,440.2h1.4v1.4h-1.4zM148.0,440.1h1.4v1.4h-1.4zM148.5,440.1h1.4v1.4h-1.4zM149.1,440.1h1.4v1.4h-1.4zM149.7,440.1h1.4v1.4h-1.4zM150.3,440.1h1.4v1.4h-1.4zM150.9,440.1h1.4v1.4h-1.4zM151.4,440.1h1.4v1.4h-1.4zM152.0,440.1h1.4v1.4h-1.4zM152.6,440.1h1.4v1.4h-1.4zM153.2,440.1h1.4v1.4h-1.4zM153.8,440.1h1.4v1.4h-1.4zM154.3,440.1h1.4v1.4h-1.4zM154.9,440.1h1.4v1.4h-1.4zM155.5,440.1h1.4v1.4h-1.4zM156.1,440.1h1.4v1.4h-1.4zM156.7,440.1h1.4v1.4h-1.4zM157.2,440.1h1.4v1.4h-1.4zM157.8,440.1h1.4v1.4h-1.4zM158.4,440.1h1.4v1.4h-1.4zM159.0,440.1h1.4v1.4h-1.4zM159.6,440.1h1.4v1.4h-1.4zM160.1,440.1h1.4v1.4h-1.4zM160.7,440.1h1.4v1.4h-1.4zM161.3,440.1h1.4v1.4h-1.4zM161.9,440.1h1.4v1.4h-1.4zM162.5,440.1h1.4v1.4h-1.4zM163.0,440.1h1.4v1.4h-1.4zM163.6,440.1h1.4v1.4h-1.4zM164.2,440.0h1.4v1.4h-1.4zM164.8,440.0h1.4v1.4h-1.4zM165.4,440.0h1.4v1.4h-1.4zM165.9,440.0h1.4v1.4h-1.4zM166.5,440.0h1.4v1.4h-1.4zM167.1,440.0h1.4v1.4h-1.4zM167.7,440.0h1.4v1.4h-1.4zM168.3,440.0h1.4v1.4h-1.4zM168.8,440.0h1.4v1.4h-1.4zM169.4,440.0h1.4v1.4h-1.4zM170.0,440.0h1.4v1.4h-1.4zM170.6,440.0h1.4v1.4h-1.4zM171.2,440.0h1.4v1.4h-1.4zM171.8,440.0h1.4v1.4h-1.4zM172.3,440.0h1.4v1.4h-1.4zM172.9,440.0h1.4v1.4h-1.4zM173.5,440.0h1.4v1.4h-1.4zM174.1,440.0h1.4v1.4h-1.4zM174.7,440.0h1.4v1.4h-1.4zM175.2,440.0h1.4v1.4h-1.4zM175.8,440.0h1.4v1.4h-1.4zM176.4,440.0h1.4v1.4h-1.4zM177.0,440.0h1.4v1.4h-1.4zM177.6,440.0h1.4v1.4h-1.4zM178.1,440.0h1.4v1.4h-1.4zM178.7,440.0h1.4v1.4h-1.4zM179.3,440.0h1.4v1.4h-1.4zM179.9,440.0h1.4v1.4h-1.4zM180.5,439.9h1.4v1.4h-1.4zM181.0,439.9h1.4v1.4h-1.4zM181.6,439.9h1.4v1.4h-1.4zM182.2,439.9h1.4v1.4h-1.4zM182.8,439.9h1.4v1.4h-1.4zM183.4,439.9h1.4v1.4h-1.4zM183.9,439.9h1.4v1.4h-1.4zM184.5,439.9h1.4v1.4h-1.4zM185.1,439.9h1.4v1.4h-1.4zM185.7,439.9h1.4v1.4h-1.4zM186.3,439.9h1.4v1.4h-1.4zM186.8,439.9h1.4v1.4h-1.4zM187.4,439.9h1.4v1.4h-1.4zM188.0,439.9h1.4v1.4h-1.4zM188.7,439.9h1.4v1.4h-1.4zM189.3,439.9h1.4v1.4h-1.4zM189.4,442.6h1.4v1.4h-1.4zM190.0,443.6h1.4v1.4h-1.4zM190.7,444.7h1.4v1.4h-1.4zM191.3,445.7h1.4v1.4h-1.4zM191.9,445.7h1.4v1.4h-1.4zM192.5,445.7h1.4v1.4h-1.4zM193.1,445.8h1.4v1.4h-1.4zM193.7,445.8h1.4v1.4h-1.4zM194.4,445.8h1.4v1.4h-1.4zM195.0,445.8h1.4v1.4h-1.4zM195.6,445.9h1.4v1.4h-1.4zM196.2,445.9h1.4v1.4h-1.4zM196.8,445.9h1.4v1.4h-1.4zM197.0,444.3h1.4v1.4h-1.4zM196.6,448.7h1.4v1.4h-1.4zM197.2,449.9h1.4v1.4h-1.4zM197.9,451.1h1.4v1.4h-1.4zM198.5,452.3h1.4v1.4h-1.4zM199.0,447.8h1.4v1.4h-1.4zM199.6,447.1h1.4v1.4h-1.4zM200.2,446.4h1.4v1.4h-1.4zM200.8,445.8h1.4v1.4h-1.4zM201.3,445.1h1.4v1.4h-1.4zM201.9,444.4h1.4v1.4h-1.4zM202.5,443.7h1.4v1.4h-1.4zM203.1,443.4h1.4v1.4h-1.4zM203.8,443.2h1.4v1.4h-1.4zM204.4,442.9h1.4v1.4h-1.4zM205.0,442.7h1.4v1.4h-1.4zM205.6,442.7h1.4v1.4h-1.4zM206.2,442.7h1.4v1.4h-1.4zM206.8,442.7h1.4v1.4h-1.4zM207.3,442.7h1.4v1.4h-1.4zM207.9,442.7h1.4v1.4h-1.4zM208.5,442.7h1.4v1.4h-1.4zM209.1,442.7h1.4v1.4h-1.4zM209.7,442.7h1.4v1.4h-1.4zM210.3,442.7h1.4v1.4h-1.4zM210.9,442.7h1.4v1.4h-1.4zM211.4,442.7h1.4v1.4h-1.4zM212.0,442.7h1.4v1.4h-1.4zM212.6,442.7h1.4v1.4h-1.4zM213.2,442.7h1.4v1.4h-1.4zM213.8,442.7h1.4v1.4h-1.4zM214.4,442.7h1.4v1.4h-1.4zM215.0,442.7h1.4v1.4h-1.4zM215.5,442.7h1.4v1.4h-1.4zM216.1,442.7h1.4v1.4h-1.4zM216.7,442.7h1.4v1.4h-1.4zM217.3,442.7h1.4v1.4h-1.4zM217.9,442.7h1.4v1.4h-1.4zM218.5,442.7h1.4v1.4h-1.4zM219.1,442.7h1.4v1.4h-1.4zM219.6,442.7h1.4v1.4h-1.4zM220.2,442.7h1.4v1.4h-1.4zM220.8,442.7h1.4v1.4h-1.4zM221.4,442.7h1.4v1.4h-1.4zM222.0,442.7h1.4v1.4h-1.4zM222.6,442.7h1.4v1.4h-1.4zM223.2,442.7h1.4v1.4h-1.4zM223.7,442.7h1.4v1.4h-1.4zM224.3,442.7h1.4v1.4h-1.4zM224.9,442.7h1.4v1.4h-1.4zM225.5,442.7h1.4v1.4h-1.4zM226.1,442.7h1.4v1.4h-1.4zM226.7,442.7h1.4v1.4h-1.4zM227.3,442.7h1.4v1.4h-1.4zM227.8,442.7h1.4v1.4h-1.4zM228.4,442.7h1.4v1.4h-1.4zM229.0,442.7h1.4v1.4h-1.4zM229.6,442.7h1.4v1.4h-1.4zM230.2,442.7h1.4v1.4h-1.4zM230.8,442.7h1.4v1.4h-1.4zM231.4,442.7h1.4v1.4h-1.4zM231.9,442.7h1.4v1.4h-1.4zM232.5,442.7h1.4v1.4h-1.4zM233.1,442.7h1.4v1.4h-1.4zM233.7,442.7h1.4v1.4h-1.4zM234.3,442.7h1.4v1.4h-1.4zM234.9,442.7h1.4v1.4h-1.4zM235.5,442.7h1.4v1.4h-1.4zM236.0,442.7h1.4v1.4h-1.4zM236.6,442.7h1.4v1.4h-1.4zM237.2,442.7h1.4v1.4h-1.4zM237.8,442.7h1.4v1.4h-1.4zM238.4,442.5h1.4v1.4h-1.4zM239.1,442.3h1.4v1.4h-1.4zM239.7,442.2h1.4v1.4h-1.4zM240.3,442.0h1.4v1.4h-1.4zM241.0,441.8h1.4v1.4h-1.4zM241.6,441.6h1.4v1.4h-1.4zM242.2,441.8h1.4v1.4h-1.4zM242.9,441.9h1.4v1.4h-1.4zM243.5,442.1h1.4v1.4h-1.4zM244.1,442.3h1.4v1.4h-1.4zM244.8,442.4h1.4v1.4h-1.4zM245.4,442.6h1.4v1.4h-1.4zM246.1,442.7h1.4v1.4h-1.4zM246.7,442.9h1.4v1.4h-1.4zM247.3,442.9h1.4v1.4h-1.4zM247.9,442.9h1.4v1.4h-1.4zM248.4,442.9h1.4v1.4h-1.4zM249.0,442.9h1.4v1.4h-1.4zM249.6,442.9h1.4v1.4h-1.4zM250.2,442.9h1.4v1.4h-1.4zM250.8,442.9h1.4v1.4h-1.4zM251.3,442.9h1.4v1.4h-1.4zM251.9,442.9h1.4v1.4h-1.4zM252.5,442.9h1.4v1.4h-1.4zM253.1,442.9h1.4v1.4h-1.4zM253.7,442.9h1.4v1.4h-1.4zM254.2,442.9h1.4v1.4h-1.4zM254.8,442.9h1.4v1.4h-1.4zM255.4,442.9h1.4v1.4h-1.4zM256.0,442.9h1.4v1.4h-1.4zM256.6,442.9h1.4v1.4h-1.4zM257.1,442.9h1.4v1.4h-1.4zM257.7,442.9h1.4v1.4h-1.4zM258.3,442.9h1.4v1.4h-1.4zM258.9,442.9h1.4v1.4h-1.4zM259.5,442.9h1.4v1.4h-1.4zM260.1,442.9h1.4v1.4h-1.4zM260.6,442.9h1.4v1.4h-1.4zM261.2,442.9h1.4v1.4h-1.4zM261.8,442.9h1.4v1.4h-1.4zM262.4,442.9h1.4v1.4h-1.4zM263.0,442.9h1.4v1.4h-1.4zM263.5,442.9h1.4v1.4h-1.4zM264.1,442.9h1.4v1.4h-1.4zM264.7,442.9h1.4v1.4h-1.4zM265.3,442.9h1.4v1.4h-1.4zM265.9,442.9h1.4v1.4h-1.4zM266.4,442.9h1.4v1.4h-1.4zM267.0,442.9h1.4v1.4h-1.4zM267.6,442.9h1.4v1.4h-1.4zM268.2,442.9h1.4v1.4h-1.4zM268.8,442.9h1.4v1.4h-1.4zM269.3,442.9h1.4v1.4h-1.4zM269.9,442.9h1.4v1.4h-1.4zM270.5,442.9h1.4v1.4h-1.4zM271.1,442.9h1.4v1.4h-1.4zM271.7,442.9h1.4v1.4h-1.4zM272.2,442.9h1.4v1.4h-1.4zM272.8,442.9h1.4v1.4h-1.4zM273.4,442.9h1.4v1.4h-1.4zM274.0,442.9h1.4v1.4h-1.4zM274.6,442.9h1.4v1.4h-1.4zM275.1,442.9h1.4v1.4h-1.4zM275.7,442.9h1.4v1.4h-1.4zM276.3,442.9h1.4v1.4h-1.4zM276.9,442.9h1.4v1.4h-1.4zM277.5,442.9h1.4v1.4h-1.4zM278.0,442.9h1.4v1.4h-1.4zM278.6,442.9h1.4v1.4h-1.4zM279.2,442.9h1.4v1.4h-1.4zM279.8,442.9h1.4v1.4h-1.4zM280.4,442.9h1.4v1.4h-1.4zM280.9,442.9h1.4v1.4h-1.4zM281.5,442.9h1.4v1.4h-1.4zM282.1,442.9h1.4v1.4h-1.4zM282.7,442.9h1.4v1.4h-1.4zM283.3,442.9h1.4v1.4h-1.4zM283.9,442.9h1.4v1.4h-1.4zM284.4,442.9h1.4v1.4h-1.4zM285.0,442.9h1.4v1.4h-1.4zM285.6,442.9h1.4v1.4h-1.4zM286.2,442.9h1.4v1.4h-1.4zM286.8,442.9h1.4v1.4h-1.4zM287.3,442.9h1.4v1.4h-1.4zM287.9,442.9h1.4v1.4h-1.4zM288.5,442.9h1.4v1.4h-1.4zM289.1,442.9h1.4v1.4h-1.4zM289.7,442.9h1.4v1.4h-1.4zM290.2,442.9h1.4v1.4h-1.4zM290.8,442.9h1.4v1.4h-1.4zM291.4,442.9h1.4v1.4h-1.4zM292.0,442.9h1.4v1.4h-1.4zM292.6,442.9h1.4v1.4h-1.4zM293.1,442.9h1.4v1.4h-1.4zM293.7,442.9h1.4v1.4h-1.4zM294.3,442.9h1.4v1.4h-1.4zM294.9,442.9h1.4v1.4h-1.4zM295.5,442.9h1.4v1.4h-1.4zM296.0,442.9h1.4v1.4h-1.4zM296.6,442.9h1.4v1.4h-1.4zM297.2,442.9h1.4v1.4h-1.4zM297.8,442.9h1.4v1.4h-1.4zM298.4,442.9h1.4v1.4h-1.4zM298.9,442.9h1.4v1.4h-1.4zM299.5,442.9h1.4v1.4h-1.4zM300.1,442.9h1.4v1.4h-1.4zM300.7,442.9h1.4v1.4h-1.4zM301.3,442.9h1.4v1.4h-1.4zM301.8,442.9h1.4v1.4h-1.4zM302.4,442.9h1.4v1.4h-1.4zM303.0,442.9h1.4v1.4h-1.4zM303.6,442.9h1.4v1.4h-1.4zM304.2,442.9h1.4v1.4h-1.4zM304.8,442.9h1.4v1.4h-1.4zM305.3,442.9h1.4v1.4h-1.4zM305.9,442.9h1.4v1.4h-1.4zM306.5,442.9h1.4v1.4h-1.4zM307.1,442.9h1.4v1.4h-1.4zM307.7,442.9h1.4v1.4h-1.4zM308.2,442.9h1.4v1.4h-1.4zM308.8,442.9h1.4v1.4h-1.4zM309.4,442.9h1.4v1.4h-1.4zM310.0,442.9h1.4v1.4h-1.4zM310.6,442.9h1.4v1.4h-1.4zM311.1,442.9h1.4v1.4h-1.4zM311.7,442.9h1.4v1.4h-1.4zM312.3,442.9h1.4v1.4h-1.4zM312.9,442.9h1.4v1.4h-1.4zM313.5,442.9h1.4v1.4h-1.4zM314.0,442.9h1.4v1.4h-1.4zM314.6,442.9h1.4v1.4h-1.4zM315.2,442.9h1.4v1.4h-1.4zM315.8,442.9h1.4v1.4h-1.4zM316.4,442.9h1.4v1.4h-1.4zM316.9,442.9h1.4v1.4h-1.4zM317.5,442.9h1.4v1.4h-1.4zM318.1,442.9h1.4v1.4h-1.4zM318.7,442.9h1.4v1.4h-1.4zM319.3,442.9h1.4v1.4h-1.4zM319.8,442.9h1.4v1.4h-1.4zM320.4,442.9h1.4v1.4h-1.4zM321.0,442.9h1.4v1.4h-1.4zM321.6,442.9h1.4v1.4h-1.4zM322.2,442.9h1.4v1.4h-1.4zM322.7,442.9h1.4v1.4h-1.4zM323.3,442.9h1.4v1.4h-1.4zM323.9,442.9h1.4v1.4h-1.4zM324.5,442.9h1.4v1.4h-1.4zM325.1,442.9h1.4v1.4h-1.4zM325.6,442.9h1.4v1.4h-1.4zM326.2,442.9h1.4v1.4h-1.4zM326.8,442.9h1.4v1.4h-1.4zM327.4,442.9h1.4v1.4h-1.4zM328.0,442.9h1.4v1.4h-1.4zM328.6,442.9h1.4v1.4h-1.4zM329.1,442.9h1.4v1.4h-1.4zM329.7,442.9h1.4v1.4h-1.4zM330.3,442.9h1.4v1.4h-1.4zM330.9,442.9h1.4v1.4h-1.4zM331.5,442.9h1.4v1.4h-1.4zM332.0,442.9h1.4v1.4h-1.4zM332.6,442.9h1.4v1.4h-1.4zM333.2,442.9h1.4v1.4h-1.4zM333.8,442.9h1.4v1.4h-1.4zM334.4,442.9h1.4v1.4h-1.4zM334.9,442.9h1.4v1.4h-1.4zM335.5,442.9h1.4v1.4h-1.4zM336.1,442.9h1.4v1.4h-1.4zM336.7,442.9h1.4v1.4h-1.4zM337.3,442.9h1.4v1.4h-1.4zM337.8,442.9h1.4v1.4h-1.4zM338.4,442.9h1.4v1.4h-1.4zM339.0,442.9h1.4v1.4h-1.4zM339.5,458.2h1.4v1.4h-1.4zM339.9,464.1h1.4v1.4h-1.4zM340.4,470.1h1.4v1.4h-1.4zM340.8,476.0h1.4v1.4h-1.4zM341.4,478.9h1.4v1.4h-1.4zM342.1,481.8h1.4v1.4h-1.4zM342.8,484.6h1.4v1.4h-1.4zM343.4,487.5h1.4v1.4h-1.4zM344.0,488.1h1.4v1.4h-1.4zM344.7,488.8h1.4v1.4h-1.4zM345.3,489.4h1.4v1.4h-1.4zM345.9,490.0h1.4v1.4h-1.4zM346.6,490.7h1.4v1.4h-1.4zM347.2,491.3h1.4v1.4h-1.4zM347.8,491.5h1.4v1.4h-1.4zM348.5,491.7h1.4v1.4h-1.4zM349.1,491.9h1.4v1.4h-1.4zM349.7,492.2h1.4v1.4h-1.4zM350.4,492.4h1.4v1.4h-1.4zM351.0,492.6h1.4v1.4h-1.4zM351.6,492.6h1.4v1.4h-1.4zM352.3,492.6h1.4v1.4h-1.4zM352.9,492.6h1.4v1.4h-1.4zM353.5,492.6h1.4v1.4h-1.4zM354.2,492.6h1.4v1.4h-1.4zM354.8,492.6h1.4v1.4h-1.4zM355.5,491.8h1.4v1.4h-1.4zM356.2,491.1h1.4v1.4h-1.4zM356.8,490.3h1.4v1.4h-1.4zM357.5,489.6h1.4v1.4h-1.4zM358.2,488.8h1.4v1.4h-1.4zM358.5,483.6h1.4v1.4h-1.4zM358.9,478.5h1.4v1.4h-1.4zM359.2,473.3h1.4v1.4h-1.4zM359.7,468.2h1.4v1.4h-1.4zM360.2,463.2h1.4v1.4h-1.4zM360.7,458.2h1.4v1.4h-1.4zM361.2,453.1h1.4v1.4h-1.4zM361.8,451.7h1.4v1.4h-1.4zM362.5,450.4h1.4v1.4h-1.4zM363.1,449.0h1.4v1.4h-1.4zM363.7,447.6h1.4v1.4h-1.4zM364.4,446.3h1.4v1.4h-1.4zM365.0,444.9h1.4v1.4h-1.4zM365.6,444.7h1.4v1.4h-1.4zM366.2,444.4h1.4v1.4h-1.4zM366.9,444.2h1.4v1.4h-1.4zM367.5,443.9h1.4v1.4h-1.4zM368.1,443.7h1.4v1.4h-1.4zM368.8,443.4h1.4v1.4h-1.4zM369.4,443.2h1.4v1.4h-1.4zM370.0,442.9h1.4v1.4h-1.4zM370.7,445.2h1.4v1.4h-1.4zM371.4,447.5h1.4v1.4h-1.4zM372.0,447.6h1.4v1.4h-1.4zM372.7,447.8h1.4v1.4h-1.4zM373.3,447.9h1.4v1.4h-1.4zM373.9,448.1h1.4v1.4h-1.4zM374.6,448.2h1.4v1.4h-1.4zM375.2,448.4h1.4v1.4h-1.4zM375.9,448.6h1.4v1.4h-1.4zM376.5,448.7h1.4v1.4h-1.4zM377.1,448.9h1.4v1.4h-1.4zM377.8,449.0h1.4v1.4h-1.4zM378.4,449.2h1.4v1.4h-1.4zM379.1,449.3h1.4v1.4h-1.4zM379.7,449.5h1.4v1.4h-1.4zM380.3,449.7h1.4v1.4h-1.4zM381.0,449.8h1.4v1.4h-1.4zM381.6,450.0h1.4v1.4h-1.4zM382.2,450.0h1.4v1.4h-1.4zM382.8,450.1h1.4v1.4h-1.4zM383.4,450.1h1.4v1.4h-1.4zM384.0,450.2h1.4v1.4h-1.4zM384.6,450.2h1.4v1.4h-1.4zM385.2,450.2h1.4v1.4h-1.4zM385.7,450.3h1.4v1.4h-1.4zM386.3,450.3h1.4v1.4h-1.4zM386.9,450.3h1.4v1.4h-1.4zM387.5,450.4h1.4v1.4h-1.4zM388.1,450.4h1.4v1.4h-1.4zM388.7,450.5h1.4v1.4h-1.4zM389.3,450.5h1.4v1.4h-1.4zM390.6,425.0h1.4v1.4h-1.4zM391.3,420.2h1.4v1.4h-1.4zM392.0,415.3h1.4v1.4h-1.4zM392.6,413.6h1.4v1.4h-1.4zM393.2,411.8h1.4v1.4h-1.4zM393.8,410.1h1.4v1.4h-1.4zM394.4,408.3h1.4v1.4h-1.4zM395.0,409.1h1.4v1.4h-1.4zM395.7,409.9h1.4v1.4h-1.4zM396.3,410.7h1.4v1.4h-1.4zM396.9,411.6h1.4v1.4h-1.4zM397.6,412.4h1.4v1.4h-1.4zM398.2,413.2h1.4v1.4h-1.4zM398.9,414.0h1.4v1.4h-1.4zM399.5,414.8h1.4v1.4h-1.4zM400.1,415.7h1.4v1.4h-1.4zM400.8,416.5h1.4v1.4h-1.4zM401.4,417.4h1.4v1.4h-1.4zM402.0,418.2h1.4v1.4h-1.4zM402.6,419.1h1.4v1.4h-1.4zM403.2,419.9h1.4v1.4h-1.4zM403.9,420.8h1.4v1.4h-1.4zM404.5,421.6h1.4v1.4h-1.4zM405.1,422.4h1.4v1.4h-1.4zM405.8,423.3h1.4v1.4h-1.4zM406.4,424.1h1.4v1.4h-1.4zM407.0,425.0h1.4v1.4h-1.4zM407.5,430.1h1.4v1.4h-1.4zM407.9,435.2h1.4v1.4h-1.4zM408.4,440.3h1.4v1.4h-1.4zM408.8,445.8h1.4v1.4h-1.4zM409.3,451.4h1.4v1.4h-1.4zM409.7,456.9h1.4v1.4h-1.4zM410.5,456.6h1.4v1.4h-1.4zM411.2,456.4h1.4v1.4h-1.4zM412.0,456.1h1.4v1.4h-1.4zM412.6,456.1h1.4v1.4h-1.4zM413.2,456.1h1.4v1.4h-1.4zM413.8,456.1h1.4v1.4h-1.4zM414.3,456.1h1.4v1.4h-1.4zM414.9,456.1h1.4v1.4h-1.4zM415.5,456.1h1.4v1.4h-1.4zM416.1,456.1h1.4v1.4h-1.4zM416.7,456.1h1.4v1.4h-1.4zM417.3,456.1h1.4v1.4h-1.4zM417.8,456.1h1.4v1.4h-1.4zM418.4,456.1h1.4v1.4h-1.4zM419.0,456.1h1.4v1.4h-1.4zM419.6,456.1h1.4v1.4h-1.4zM420.2,456.1h1.4v1.4h-1.4zM420.8,456.1h1.4v1.4h-1.4zM421.4,456.1h1.4v1.4h-1.4zM421.9,456.1h1.4v1.4h-1.4zM422.5,456.1h1.4v1.4h-1.4zM423.1,456.1h1.4v1.4h-1.4zM423.7,456.1h1.4v1.4h-1.4zM424.3,456.1h1.4v1.4h-1.4zM424.9,456.1h1.4v1.4h-1.4zM425.5,456.1h1.4v1.4h-1.4zM426.0,456.1h1.4v1.4h-1.4zM426.6,456.1h1.4v1.4h-1.4zM427.2,456.1h1.4v1.4h-1.4zM427.8,456.1h1.4v1.4h-1.4zM428.4,456.1h1.4v1.4h-1.4zM429.0,456.1h1.4v1.4h-1.4zM429.5,456.1h1.4v1.4h-1.4zM430.1,456.1h1.4v1.4h-1.4zM430.7,456.1h1.4v1.4h-1.4zM431.3,456.1h1.4v1.4h-1.4zM431.9,456.1h1.4v1.4h-1.4zM432.5,456.1h1.4v1.4h-1.4zM433.1,456.1h1.4v1.4h-1.4zM433.6,456.1h1.4v1.4h-1.4zM434.2,456.1h1.4v1.4h-1.4zM434.8,456.1h1.4v1.4h-1.4zM435.4,456.1h1.4v1.4h-1.4zM436.0,456.1h1.4v1.4h-1.4zM436.6,456.1h1.4v1.4h-1.4zM437.1,456.1h1.4v1.4h-1.4zM437.7,456.1h1.4v1.4h-1.4zM438.3,456.1h1.4v1.4h-1.4zM438.9,456.1h1.4v1.4h-1.4zM439.5,456.1h1.4v1.4h-1.4zM440.1,456.1h1.4v1.4h-1.4zM440.7,456.1h1.4v1.4h-1.4zM441.2,456.1h1.4v1.4h-1.4zM441.8,456.1h1.4v1.4h-1.4zM442.4,456.1h1.4v1.4h-1.4zM443.0,456.1h1.4v1.4h-1.4zM443.6,456.1h1.4v1.4h-1.4zM444.2,456.1h1.4v1.4h-1.4zM444.7,456.1h1.4v1.4h-1.4zM445.3,456.1h1.4v1.4h-1.4zM445.9,456.1h1.4v1.4h-1.4zM446.5,456.1h1.4v1.4h-1.4zM447.1,456.1h1.4v1.4h-1.4zM447.7,456.1h1.4v1.4h-1.4zM448.3,456.1h1.4v1.4h-1.4zM448.8,456.1h1.4v1.4h-1.4zM449.4,456.1h1.4v1.4h-1.4zM450.0,456.1h1.4v1.4h-1.4zM450.6,456.1h1.4v1.4h-1.4zM451.2,456.1h1.4v1.4h-1.4zM451.8,456.1h1.4v1.4h-1.4zM452.4,456.1h1.4v1.4h-1.4zM452.9,456.1h1.4v1.4h-1.4zM453.5,456.1h1.4v1.4h-1.4zM454.1,456.1h1.4v1.4h-1.4zM454.7,456.1h1.4v1.4h-1.4zM455.3,456.1h1.4v1.4h-1.4zM455.9,456.1h1.4v1.4h-1.4zM456.4,456.1h1.4v1.4h-1.4zM457.0,456.1h1.4v1.4h-1.4zM457.6,456.1h1.4v1.4h-1.4zM458.2,456.1h1.4v1.4h-1.4zM458.8,456.3h1.4v1.4h-1.4zM459.5,456.5h1.4v1.4h-1.4zM460.1,456.7h1.4v1.4h-1.4zM460.7,456.9h1.4v1.4h-1.4zM461.4,457.2h1.4v1.4h-1.4zM462.0,457.4h1.4v1.4h-1.4zM462.6,457.6h1.4v1.4h-1.4zM463.2,457.8h1.4v1.4h-1.4zM463.9,458.0h1.4v1.4h-1.4zM464.5,458.2h1.4v1.4h-1.4zM465.1,460.8h1.4v1.4h-1.4zM465.8,463.3h1.4v1.4h-1.4zM466.3,467.9h1.4v1.4h-1.4zM466.8,472.5h1.4v1.4h-1.4zM467.4,477.1h1.4v1.4h-1.4zM467.9,481.7h1.4v1.4h-1.4zM468.4,486.3h1.4v1.4h-1.4zM469.0,489.5h1.4v1.4h-1.4zM469.7,492.7h1.4v1.4h-1.4zM470.4,495.8h1.4v1.4h-1.4zM471.0,499.0h1.4v1.4h-1.4zM471.4,494.3h1.4v1.4h-1.4zM471.7,489.5h1.4v1.4h-1.4zM472.1,484.8h1.4v1.4h-1.4zM472.4,480.0h1.4v1.4h-1.4zM472.8,475.3h1.4v1.4h-1.4zM473.1,470.5h1.4v1.4h-1.4zM473.5,465.8h1.4v1.4h-1.4zM474.1,463.7h1.4v1.4h-1.4zM474.8,461.6h1.4v1.4h-1.4zM475.4,459.4h1.4v1.4h-1.4zM476.0,457.3h1.4v1.4h-1.4zM476.7,455.2h1.4v1.4h-1.4zM477.3,453.1h1.4v1.4h-1.4zM477.9,457.6h1.4v1.4h-1.4zM478.6,462.0h1.4v1.4h-1.4zM479.2,466.5h1.4v1.4h-1.4zM479.8,470.9h1.4v1.4h-1.4zM480.4,476.0h1.4v1.4h-1.4zM481.1,481.1h1.4v1.4h-1.4zM481.8,486.2h1.4v1.4h-1.4zM482.4,491.3h1.4v1.4h-1.4zM483.0,492.3h1.4v1.4h-1.4zM483.6,493.3h1.4v1.4h-1.4zM484.2,494.3h1.4v1.4h-1.4zM484.8,495.3h1.4v1.4h-1.4zM485.4,496.3h1.4v1.4h-1.4zM486.0,497.3h1.4v1.4h-1.4zM486.7,498.1h1.4v1.4h-1.4zM487.4,498.8h1.4v1.4h-1.4zM488.1,499.6h1.4v1.4h-1.4zM488.8,500.3h1.4v1.4h-1.4zM489.4,506.0h1.4v1.4h-1.4zM490.0,511.7h1.4v1.4h-1.4zM490.6,513.2h1.4v1.4h-1.4zM491.3,514.7h1.4v1.4h-1.4zM491.9,516.2h1.4v1.4h-1.4zM492.6,517.7h1.4v1.4h-1.4zM493.2,519.2h1.4v1.4h-1.4zM493.9,520.7h1.4v1.4h-1.4zM494.5,520.8h1.4v1.4h-1.4zM495.1,520.9h1.4v1.4h-1.4zM495.8,521.1h1.4v1.4h-1.4zM496.4,521.2h1.4v1.4h-1.4zM497.0,521.3h1.4v1.4h-1.4zM497.6,521.3h1.4v1.4h-1.4zM498.3,521.3h1.4v1.4h-1.4zM498.9,521.3h1.4v1.4h-1.4zM499.6,521.3h1.4v1.4h-1.4zM500.2,521.3h1.4v1.4h-1.4zM500.9,521.3h1.4v1.4h-1.4zM501.5,521.3h1.4v1.4h-1.4zM720.0,369.3h1.4v1.4h-1.4zM720.6,370.6h1.4v1.4h-1.4zM721.3,371.9h1.4v1.4h-1.4zM721.9,373.2h1.4v1.4h-1.4zM722.6,374.4h1.4v1.4h-1.4zM723.2,375.7h1.4v1.4h-1.4zM723.9,377.0h1.4v1.4h-1.4zM724.5,378.3h1.4v1.4h-1.4zM725.2,381.0h1.4v1.4h-1.4zM725.8,383.6h1.4v1.4h-1.4zM726.5,386.3h1.4v1.4h-1.4zM727.2,389.0h1.4v1.4h-1.4zM727.8,391.6h1.4v1.4h-1.4zM728.5,394.3h1.4v1.4h-1.4zM729.2,399.8h1.4v1.4h-1.4zM729.8,405.4h1.4v1.4h-1.4zM730.5,410.9h1.4v1.4h-1.4zM731.2,413.6h1.4v1.4h-1.4zM731.9,416.3h1.4v1.4h-1.4zM732.6,419.0h1.4v1.4h-1.4zM712.0,439.3h1.4v1.4h-1.4zM712.7,443.3h1.4v1.4h-1.4zM713.3,447.3h1.4v1.4h-1.4zM714.0,451.3h1.4v1.4h-1.4zM714.7,456.0h1.4v1.4h-1.4zM715.3,460.6h1.4v1.4h-1.4zM716.0,465.3h1.4v1.4h-1.4zM716.7,470.0h1.4v1.4h-1.4zM717.3,474.6h1.4v1.4h-1.4zM718.0,479.3h1.4v1.4h-1.4zM718.5,484.5h1.4v1.4h-1.4zM719.0,489.7h1.4v1.4h-1.4zM719.5,494.9h1.4v1.4h-1.4zM720.0,500.1h1.4v1.4h-1.4zM720.6,502.2h1.4v1.4h-1.4zM721.2,504.2h1.4v1.4h-1.4zM721.8,506.2h1.4v1.4h-1.4zM722.4,508.3h1.4v1.4h-1.4zM723.2,511.3h1.4v1.4h-1.4zM724.0,514.3h1.4v1.4h-1.4zM736.6,191.3h1.4v1.4h-1.4zM736.8,186.6h1.4v1.4h-1.4zM736.9,182.0h1.4v1.4h-1.4zM737.1,177.3h1.4v1.4h-1.4zM737.2,172.6h1.4v1.4h-1.4zM737.4,168.0h1.4v1.4h-1.4zM737.5,163.3h1.4v1.4h-1.4zM737.7,158.6h1.4v1.4h-1.4zM737.8,154.0h1.4v1.4h-1.4zM738.0,149.3h1.4v1.4h-1.4zM738.3,144.8h1.4v1.4h-1.4zM738.5,140.2h1.4v1.4h-1.4zM738.8,135.7h1.4v1.4h-1.4zM739.1,131.1h1.4v1.4h-1.4zM739.4,126.6h1.4v1.4h-1.4zM739.6,122.0h1.4v1.4h-1.4zM739.9,117.5h1.4v1.4h-1.4zM740.2,112.9h1.4v1.4h-1.4zM740.5,108.4h1.4v1.4h-1.4zM740.7,103.8h1.4v1.4h-1.4zM741.0,99.3h1.4v1.4h-1.4zM741.1,94.3h1.4v1.4h-1.4zM741.2,89.3h1.4v1.4h-1.4zM741.4,84.3h1.4v1.4h-1.4zM741.5,79.3h1.4v1.4h-1.4zM741.6,74.3h1.4v1.4h-1.4zM741.8,69.3h1.4v1.4h-1.4zM741.9,64.3h1.4v1.4h-1.4zM742.0,59.3h1.4v1.4h-1.4zM742.6,56.3h1.4v1.4h-1.4zM743.2,53.3h1.4v1.4h-1.4zM743.8,50.3h1.4v1.4h-1.4zM744.4,47.3h1.4v1.4h-1.4zM745.0,44.3h1.4v1.4h-1.4zM745.6,43.9h1.4v1.4h-1.4zM746.2,43.5h1.4v1.4h-1.4zM746.9,43.2h1.4v1.4h-1.4zM747.5,42.8h1.4v1.4h-1.4zM748.1,42.4h1.4v1.4h-1.4zM748.8,42.0h1.4v1.4h-1.4zM749.4,41.7h1.4v1.4h-1.4zM750.0,41.3h1.4v1.4h-1.4zM750.6,41.2h1.4v1.4h-1.4zM751.2,41.2h1.4v1.4h-1.4zM751.8,41.1h1.4v1.4h-1.4zM752.4,41.1h1.4v1.4h-1.4zM752.9,41.0h1.4v1.4h-1.4zM753.5,40.9h1.4v1.4h-1.4zM754.1,40.9h1.4v1.4h-1.4zM754.7,40.8h1.4v1.4h-1.4zM755.3,40.8h1.4v1.4h-1.4zM755.9,40.7h1.4v1.4h-1.4zM756.5,40.7h1.4v1.4h-1.4zM757.1,40.6h1.4v1.4h-1.4zM757.6,40.5h1.4v1.4h-1.4zM758.2,40.5h1.4v1.4h-1.4zM758.8,40.4h1.4v1.4h-1.4zM759.4,40.4h1.4v1.4h-1.4zM760.0,40.3h1.4v1.4h-1.4zM760.7,41.3h1.4v1.4h-1.4zM761.3,42.3h1.4v1.4h-1.4zM762.0,43.3h1.4v1.4h-1.4zM762.6,43.5h1.4v1.4h-1.4zM763.2,43.8h1.4v1.4h-1.4zM763.9,44.0h1.4v1.4h-1.4zM764.5,44.3h1.4v1.4h-1.4zM765.1,44.5h1.4v1.4h-1.4zM765.8,44.8h1.4v1.4h-1.4zM766.4,45.0h1.4v1.4h-1.4zM767.0,45.3h1.4v1.4h-1.4zM767.6,45.3h1.4v1.4h-1.4zM768.2,45.4h1.4v1.4h-1.4zM768.8,45.4h1.4v1.4h-1.4zM769.4,45.5h1.4v1.4h-1.4zM770.0,45.5h1.4v1.4h-1.4zM770.5,45.6h1.4v1.4h-1.4zM771.1,45.6h1.4v1.4h-1.4zM771.7,45.7h1.4v1.4h-1.4zM772.3,45.7h1.4v1.4h-1.4zM772.9,45.8h1.4v1.4h-1.4zM773.5,45.8h1.4v1.4h-1.4zM774.1,45.8h1.4v1.4h-1.4zM774.7,45.9h1.4v1.4h-1.4zM775.3,45.9h1.4v1.4h-1.4zM775.9,46.0h1.4v1.4h-1.4zM776.5,46.0h1.4v1.4h-1.4zM777.0,46.1h1.4v1.4h-1.4zM777.6,46.1h1.4v1.4h-1.4zM778.2,46.2h1.4v1.4h-1.4zM778.8,46.2h1.4v1.4h-1.4zM779.4,46.3h1.4v1.4h-1.4zM780.0,46.3h1.4v1.4h-1.4zM783.0,451.3h1.4v1.4h-1.4zM783.2,456.1h1.4v1.4h-1.4zM783.4,460.9h1.4v1.4h-1.4zM783.6,465.7h1.4v1.4h-1.4zM783.8,470.5h1.4v1.4h-1.4zM784.0,475.3h1.4v1.4h-1.4zM784.2,480.3h1.4v1.4h-1.4zM784.4,485.3h1.4v1.4h-1.4zM784.6,490.3h1.4v1.4h-1.4zM784.8,495.3h1.4v1.4h-1.4zM785.0,500.3h1.4v1.4h-1.4zM785.7,505.6h1.4v1.4h-1.4zM786.3,511.0h1.4v1.4h-1.4zM787.0,516.3h1.4v1.4h-1.4zM787.7,521.6h1.4v1.4h-1.4zM788.3,527.0h1.4v1.4h-1.4zM789.0,532.3h1.4v1.4h-1.4zM789.7,537.6h1.4v1.4h-1.4zM790.3,543.0h1.4v1.4h-1.4zM791.0,548.3h1.4v1.4h-1.4zM791.6,548.1h1.4v1.4h-1.4zM792.2,547.9h1.4v1.4h-1.4zM792.8,547.7h1.4v1.4h-1.4zM793.4,547.5h1.4v1.4h-1.4zM794.0,547.3h1.4v1.4h-1.4zM799.4,479.8h1.4v1.4h-1.4zM799.8,475.1h1.4v1.4h-1.4zM800.1,470.3h1.4v1.4h-1.4zM800.5,465.6h1.4v1.4h-1.4zM800.8,460.8h1.4v1.4h-1.4zM801.1,456.1h1.4v1.4h-1.4zM801.5,451.3h1.4v1.4h-1.4zM802.2,448.3h1.4v1.4h-1.4zM802.9,445.3h1.4v1.4h-1.4zM803.6,442.3h1.4v1.4h-1.4zM804.3,439.3h1.4v1.4h-1.4zM804.9,438.1h1.4v1.4h-1.4zM805.6,436.9h1.4v1.4h-1.4zM806.2,435.7h1.4v1.4h-1.4zM806.9,434.5h1.4v1.4h-1.4zM807.5,433.3h1.4v1.4h-1.4zM808.1,433.1h1.4v1.4h-1.4zM808.7,432.9h1.4v1.4h-1.4zM809.3,432.7h1.4v1.4h-1.4zM809.8,432.6h1.4v1.4h-1.4zM810.4,432.4h1.4v1.4h-1.4zM811.0,432.2h1.4v1.4h-1.4zM811.6,432.0h1.4v1.4h-1.4zM812.3,433.1h1.4v1.4h-1.4zM812.9,434.2h1.4v1.4h-1.4zM813.6,435.3h1.4v1.4h-1.4zM814.0,443.3h1.4v1.4h-1.4zM814.6,448.6h1.4v1.4h-1.4zM815.1,454.0h1.4v1.4h-1.4zM815.7,459.3h1.4v1.4h-1.4zM816.4,464.3h1.4v1.4h-1.4zM817.0,469.3h1.4v1.4h-1.4zM817.7,469.9h1.4v1.4h-1.4zM818.4,470.5h1.4v1.4h-1.4zM819.0,471.1h1.4v1.4h-1.4zM819.7,471.7h1.4v1.4h-1.4zM820.3,471.7h1.4v1.4h-1.4zM820.9,471.8h1.4v1.4h-1.4zM821.5,471.8h1.4v1.4h-1.4zM822.1,471.9h1.4v1.4h-1.4zM822.7,471.9h1.4v1.4h-1.4zM823.3,472.0h1.4v1.4h-1.4zM824.0,472.0h1.4v1.4h-1.4zM824.6,472.1h1.4v1.4h-1.4zM825.2,472.1h1.4v1.4h-1.4zM825.8,472.2h1.4v1.4h-1.4zM826.4,472.2h1.4v1.4h-1.4zM827.0,472.3h1.4v1.4h-1.4zM827.6,472.3h1.4v1.4h-1.4zM828.2,472.2h1.4v1.4h-1.4zM828.9,472.1h1.4v1.4h-1.4zM829.5,472.0h1.4v1.4h-1.4zM830.2,471.9h1.4v1.4h-1.4zM830.8,471.8h1.4v1.4h-1.4zM831.4,471.7h1.4v1.4h-1.4zM832.1,471.6h1.4v1.4h-1.4zM832.7,471.5h1.4v1.4h-1.4zM833.3,471.8h1.4v1.4h-1.4zM834.0,472.2h1.4v1.4h-1.4zM834.6,472.5h1.4v1.4h-1.4zM835.2,472.8h1.4v1.4h-1.4zM835.9,473.2h1.4v1.4h-1.4zM836.5,473.5h1.4v1.4h-1.4zM837.1,474.3h1.4v1.4h-1.4zM837.8,475.0h1.4v1.4h-1.4zM838.4,475.8h1.4v1.4h-1.4zM839.0,476.6h1.4v1.4h-1.4zM839.7,477.3h1.4v1.4h-1.4zM840.3,478.1h1.4v1.4h-1.4zM840.9,478.1h1.4v1.4h-1.4zM841.5,478.1h1.4v1.4h-1.4zM842.1,478.2h1.4v1.4h-1.4zM842.7,478.2h1.4v1.4h-1.4zM843.3,478.2h1.4v1.4h-1.4zM843.9,478.2h1.4v1.4h-1.4zM844.5,478.3h1.4v1.4h-1.4zM845.1,478.3h1.4v1.4h-1.4zM845.7,478.3h1.4v1.4h-1.4zM846.3,478.3h1.4v1.4h-1.4zM847.0,478.4h1.4v1.4h-1.4zM847.6,478.4h1.4v1.4h-1.4zM848.2,478.4h1.4v1.4h-1.4zM848.8,478.4h1.4v1.4h-1.4zM849.4,478.5h1.4v1.4h-1.4zM850.0,478.5h1.4v1.4h-1.4zM850.6,478.5h1.4v1.4h-1.4zM851.2,478.5h1.4v1.4h-1.4zM851.8,478.6h1.4v1.4h-1.4zM852.4,478.6h1.4v1.4h-1.4zM853.0,478.6h1.4v1.4h-1.4zM853.6,478.6h1.4v1.4h-1.4zM854.2,478.6h1.4v1.4h-1.4zM854.7,478.6h1.4v1.4h-1.4zM855.3,478.6h1.4v1.4h-1.4zM855.9,478.6h1.4v1.4h-1.4zM856.5,478.6h1.4v1.4h-1.4zM857.1,478.6h1.4v1.4h-1.4zM857.6,478.6h1.4v1.4h-1.4zM858.2,478.6h1.4v1.4h-1.4zM858.8,478.6h1.4v1.4h-1.4zM859.4,478.6h1.4v1.4h-1.4zM860.0,478.6h1.4v1.4h-1.4zM860.6,478.6h1.4v1.4h-1.4zM861.1,478.6h1.4v1.4h-1.4zM861.7,478.6h1.4v1.4h-1.4zM862.3,478.6h1.4v1.4h-1.4zM862.9,478.6h1.4v1.4h-1.4zM863.5,478.6h1.4v1.4h-1.4zM864.0,478.6h1.4v1.4h-1.4zM864.6,478.6h1.4v1.4h-1.4zM865.2,478.6h1.4v1.4h-1.4zM865.8,478.6h1.4v1.4h-1.4zM866.4,478.6h1.4v1.4h-1.4zM866.9,478.6h1.4v1.4h-1.4zM867.5,478.6h1.4v1.4h-1.4zM868.1,478.6h1.4v1.4h-1.4zM868.7,478.6h1.4v1.4h-1.4zM869.3,478.6h1.4v1.4h-1.4zM869.8,478.6h1.4v1.4h-1.4zM870.4,478.6h1.4v1.4h-1.4zM871.0,478.6h1.4v1.4h-1.4zM871.6,478.6h1.4v1.4h-1.4zM872.2,478.6h1.4v1.4h-1.4zM872.8,478.6h1.4v1.4h-1.4zM873.3,478.6h1.4v1.4h-1.4zM873.9,478.6h1.4v1.4h-1.4zM874.5,478.6h1.4v1.4h-1.4zM875.1,478.6h1.4v1.4h-1.4zM875.7,478.6h1.4v1.4h-1.4zM876.2,478.6h1.4v1.4h-1.4zM876.8,478.6h1.4v1.4h-1.4zM877.4,478.6h1.4v1.4h-1.4zM878.0,478.6h1.4v1.4h-1.4zM878.6,478.6h1.4v1.4h-1.4zM879.1,478.6h1.4v1.4h-1.4zM879.7,478.6h1.4v1.4h-1.4zM880.3,478.6h1.4v1.4h-1.4zM880.9,478.6h1.4v1.4h-1.4zM881.5,478.6h1.4v1.4h-1.4zM882.0,478.6h1.4v1.4h-1.4zM882.6,478.6h1.4v1.4h-1.4zM883.2,478.6h1.4v1.4h-1.4zM883.8,478.6h1.4v1.4h-1.4zM884.4,478.6h1.4v1.4h-1.4zM885.0,478.6h1.4v1.4h-1.4zM885.5,478.6h1.4v1.4h-1.4zM886.1,478.6h1.4v1.4h-1.4zM886.7,478.6h1.4v1.4h-1.4zM887.3,478.6h1.4v1.4h-1.4zM887.9,478.6h1.4v1.4h-1.4zM888.4,478.6h1.4v1.4h-1.4zM889.0,478.6h1.4v1.4h-1.4zM889.6,478.6h1.4v1.4h-1.4zM890.2,478.6h1.4v1.4h-1.4zM890.8,478.6h1.4v1.4h-1.4zM891.3,478.6h1.4v1.4h-1.4zM891.9,478.6h1.4v1.4h-1.4zM892.5,478.6h1.4v1.4h-1.4zM893.1,478.6h1.4v1.4h-1.4zM893.7,478.6h1.4v1.4h-1.4zM894.2,478.6h1.4v1.4h-1.4zM894.8,478.6h1.4v1.4h-1.4zM895.4,478.6h1.4v1.4h-1.4zM896.0,478.6h1.4v1.4h-1.4zM896.6,478.6h1.4v1.4h-1.4zM897.1,478.6h1.4v1.4h-1.4zM897.7,478.6h1.4v1.4h-1.4zM898.3,478.6h1.4v1.4h-1.4zM898.9,478.6h1.4v1.4h-1.4zM899.5,478.6h1.4v1.4h-1.4zM900.1,478.6h1.4v1.4h-1.4zM900.6,478.6h1.4v1.4h-1.4zM901.2,478.6h1.4v1.4h-1.4zM901.8,478.6h1.4v1.4h-1.4zM902.4,478.6h1.4v1.4h-1.4zM903.0,478.6h1.4v1.4h-1.4zM903.5,478.6h1.4v1.4h-1.4zM904.1,478.6h1.4v1.4h-1.4zM904.7,478.6h1.4v1.4h-1.4zM905.3,478.6h1.4v1.4h-1.4zM905.9,478.6h1.4v1.4h-1.4zM906.4,478.6h1.4v1.4h-1.4zM907.0,478.6h1.4v1.4h-1.4zM907.6,478.6h1.4v1.4h-1.4zM908.2,478.6h1.4v1.4h-1.4zM908.8,478.6h1.4v1.4h-1.4zM909.3,478.6h1.4v1.4h-1.4zM909.9,478.6h1.4v1.4h-1.4zM910.5,478.6h1.4v1.4h-1.4zM911.1,478.6h1.4v1.4h-1.4zM911.7,478.6h1.4v1.4h-1.4zM912.3,478.6h1.4v1.4h-1.4zM912.8,478.6h1.4v1.4h-1.4zM913.4,478.6h1.4v1.4h-1.4zM914.0,478.6h1.4v1.4h-1.4zM914.6,478.6h1.4v1.4h-1.4zM915.2,478.6h1.4v1.4h-1.4zM915.7,478.6h1.4v1.4h-1.4zM916.3,478.6h1.4v1.4h-1.4zM916.9,478.6h1.4v1.4h-1.4zM917.5,478.8h1.4v1.4h-1.4zM918.1,479.0h1.4v1.4h-1.4zM918.7,479.2h1.4v1.4h-1.4zM919.2,479.4h1.4v1.4h-1.4zM919.8,479.6h1.4v1.4h-1.4zM920.4,479.8h1.4v1.4h-1.4zM921.0,480.0h1.4v1.4h-1.4zM921.6,480.2h1.4v1.4h-1.4zM922.2,480.4h1.4v1.4h-1.4zM922.7,480.6h1.4v1.4h-1.4zM923.3,480.8h1.4v1.4h-1.4zM923.9,481.0h1.4v1.4h-1.4zM924.5,481.2h1.4v1.4h-1.4zM925.1,481.1h1.4v1.4h-1.4zM925.7,481.1h1.4v1.4h-1.4zM926.3,481.0h1.4v1.4h-1.4zM926.9,481.0h1.4v1.4h-1.4zM927.5,480.9h1.4v1.4h-1.4zM928.1,480.9h1.4v1.4h-1.4zM928.7,480.8h1.4v1.4h-1.4zM929.3,480.8h1.4v1.4h-1.4zM930.0,480.7h1.4v1.4h-1.4zM930.6,480.7h1.4v1.4h-1.4zM931.2,480.6h1.4v1.4h-1.4zM931.8,480.6h1.4v1.4h-1.4zM932.4,480.5h1.4v1.4h-1.4zM933.0,480.5h1.4v1.4h-1.4zM933.6,480.4h1.4v1.4h-1.4zM934.2,480.4h1.4v1.4h-1.4zM934.8,480.3h1.4v1.4h-1.4zM935.4,480.4h1.4v1.4h-1.4zM936.0,480.5h1.4v1.4h-1.4zM936.6,480.6h1.4v1.4h-1.4zM937.3,480.7h1.4v1.4h-1.4zM937.9,480.8h1.4v1.4h-1.4zM938.5,480.9h1.4v1.4h-1.4zM939.1,481.0h1.4v1.4h-1.4zM939.7,481.0h1.4v1.4h-1.4zM940.3,481.1h1.4v1.4h-1.4zM940.9,481.2h1.4v1.4h-1.4zM941.5,481.3h1.4v1.4h-1.4zM942.2,481.4h1.4v1.4h-1.4zM942.8,481.5h1.4v1.4h-1.4zM943.4,481.6h1.4v1.4h-1.4zM944.0,481.7h1.4v1.4h-1.4z" fill="#6a6a6a"/>
<path d="M514.3,225.2h1.5v1.5h-1.5zM522.2,238.9h1.5v1.5h-1.5zM537.5,115.1h1.5v1.5h-1.5zM500.8,292.6h1.5v1.5h-1.5zM515.6,153.9h1.5v1.5h-1.5zM559.7,208.2h1.5v1.5h-1.5zM550.2,209.6h1.5v1.5h-1.5zM538.3,134.6h1.5v1.5h-1.5zM538.1,299.7h1.5v1.5h-1.5zM531.4,270.5h1.5v1.5h-1.5zM540.3,114.7h1.5v1.5h-1.5zM545.5,236.0h1.5v1.5h-1.5zM518.1,107.1h1.5v1.5h-1.5zM551.9,208.7h1.5v1.5h-1.5zM543.1,302.1h1.5v1.5h-1.5zM542.8,311.9h1.5v1.5h-1.5zM523.7,284.2h1.5v1.5h-1.5zM526.7,315.2h1.5v1.5h-1.5zM552.7,122.4h1.5v1.5h-1.5zM508.2,149.9h1.5v1.5h-1.5zM557.9,200.3h1.5v1.5h-1.5zM537.6,169.2h1.5v1.5h-1.5zM530.4,188.7h1.5v1.5h-1.5zM521.1,234.6h1.5v1.5h-1.5zM535.1,308.0h1.5v1.5h-1.5zM540.9,313.7h1.5v1.5h-1.5zM551.4,327.9h1.5v1.5h-1.5zM540.3,137.5h1.5v1.5h-1.5zM551.6,321.9h1.5v1.5h-1.5zM554.3,230.9h1.5v1.5h-1.5zM542.8,148.6h1.5v1.5h-1.5zM549.9,231.9h1.5v1.5h-1.5zM517.1,114.6h1.5v1.5h-1.5zM551.2,327.7h1.5v1.5h-1.5zM505.3,284.1h1.5v1.5h-1.5zM524.6,134.7h1.5v1.5h-1.5zM517.6,276.8h1.5v1.5h-1.5zM552.4,110.2h1.5v1.5h-1.5zM536.9,110.3h1.5v1.5h-1.5zM543.1,176.1h1.5v1.5h-1.5zM552.9,325.5h1.5v1.5h-1.5zM530.3,329.7h1.5v1.5h-1.5zM518.6,117.7h1.5v1.5h-1.5zM536.0,107.2h1.5v1.5h-1.5zM511.8,193.8h1.5v1.5h-1.5zM536.6,135.9h1.5v1.5h-1.5zM502.5,299.6h1.5v1.5h-1.5zM518.8,320.5h1.5v1.5h-1.5zM553.8,186.9h1.5v1.5h-1.5zM527.6,219.6h1.5v1.5h-1.5zM538.6,237.0h1.5v1.5h-1.5zM533.6,242.6h1.5v1.5h-1.5zM556.4,216.6h1.5v1.5h-1.5zM525.9,265.7h1.5v1.5h-1.5zM514.3,169.2h1.5v1.5h-1.5zM558.7,219.9h1.5v1.5h-1.5zM532.9,102.6h1.5v1.5h-1.5zM524.9,233.4h1.5v1.5h-1.5zM501.2,241.6h1.5v1.5h-1.5zM537.9,113.8h1.5v1.5h-1.5zM610.2,157.9h1.5v1.5h-1.5zM614.3,142.6h1.5v1.5h-1.5zM616.6,194.6h1.5v1.5h-1.5zM561.8,103.2h1.5v1.5h-1.5zM614.1,225.0h1.5v1.5h-1.5zM580.1,156.6h1.5v1.5h-1.5zM607.4,138.2h1.5v1.5h-1.5zM589.1,137.2h1.5v1.5h-1.5zM589.5,175.4h1.5v1.5h-1.5zM584.0,145.9h1.5v1.5h-1.5zM621.8,98.6h1.5v1.5h-1.5zM605.5,194.2h1.5v1.5h-1.5zM584.8,125.0h1.5v1.5h-1.5zM624.3,127.2h1.5v1.5h-1.5zM575.0,153.8h1.5v1.5h-1.5zM615.8,108.7h1.5v1.5h-1.5zM585.8,140.1h1.5v1.5h-1.5zM626.7,154.2h1.5v1.5h-1.5zM628.4,117.9h1.5v1.5h-1.5zM586.9,182.8h1.5v1.5h-1.5zM630.8,155.9h1.5v1.5h-1.5zM578.0,111.3h1.5v1.5h-1.5zM602.4,120.8h1.5v1.5h-1.5zM624.5,208.2h1.5v1.5h-1.5zM574.7,132.6h1.5v1.5h-1.5zM624.6,181.7h1.5v1.5h-1.5zM624.5,141.6h1.5v1.5h-1.5zM570.4,134.4h1.5v1.5h-1.5zM623.5,131.6h1.5v1.5h-1.5zM587.7,151.3h1.5v1.5h-1.5zM593.6,150.3h1.5v1.5h-1.5zM633.6,116.1h1.5v1.5h-1.5zM560.4,222.3h1.5v1.5h-1.5zM630.4,228.2h1.5v1.5h-1.5zM594.7,223.3h1.5v1.5h-1.5zM634.2,125.0h1.5v1.5h-1.5zM619.6,208.0h1.5v1.5h-1.5zM613.0,165.1h1.5v1.5h-1.5zM583.1,141.0h1.5v1.5h-1.5zM578.2,104.2h1.5v1.5h-1.5zM607.1,133.7h1.5v1.5h-1.5zM624.8,101.1h1.5v1.5h-1.5zM632.3,188.7h1.5v1.5h-1.5zM633.9,216.0h1.5v1.5h-1.5zM632.0,172.9h1.5v1.5h-1.5zM561.1,195.6h1.5v1.5h-1.5zM573.7,135.5h1.5v1.5h-1.5zM613.0,165.9h1.5v1.5h-1.5zM593.1,221.8h1.5v1.5h-1.5zM609.0,141.1h1.5v1.5h-1.5zM580.2,211.3h1.5v1.5h-1.5zM598.2,200.6h1.5v1.5h-1.5zM588.1,121.6h1.5v1.5h-1.5zM602.8,205.3h1.5v1.5h-1.5zM573.7,201.9h1.5v1.5h-1.5zM633.7,203.8h1.5v1.5h-1.5zM625.9,96.0h1.5v1.5h-1.5zM610.3,211.4h1.5v1.5h-1.5zM564.0,131.6h1.5v1.5h-1.5zM581.5,166.2h1.5v1.5h-1.5zM593.8,158.8h1.5v1.5h-1.5zM622.1,95.2h1.5v1.5h-1.5zM564.4,112.1h1.5v1.5h-1.5zM570.0,104.2h1.5v1.5h-1.5zM638.0,210.4h1.5v1.5h-1.5zM566.9,162.8h1.5v1.5h-1.5zM585.3,137.5h1.5v1.5h-1.5zM588.1,182.3h1.5v1.5h-1.5zM606.9,143.7h1.5v1.5h-1.5zM575.3,139.4h1.5v1.5h-1.5zM569.9,170.0h1.5v1.5h-1.5zM617.3,146.3h1.5v1.5h-1.5zM566.4,119.1h1.5v1.5h-1.5zM589.9,176.6h1.5v1.5h-1.5zM622.6,146.3h1.5v1.5h-1.5zM708.2,410.6h1.5v1.5h-1.5zM658.3,338.0h1.5v1.5h-1.5zM667.0,433.8h1.5v1.5h-1.5zM656.8,431.3h1.5v1.5h-1.5zM662.2,301.1h1.5v1.5h-1.5zM672.3,431.6h1.5v1.5h-1.5zM609.7,353.2h1.5v1.5h-1.5zM657.5,485.1h1.5v1.5h-1.5zM726.4,338.5h1.5v1.5h-1.5zM721.2,459.4h1.5v1.5h-1.5zM635.4,364.6h1.5v1.5h-1.5zM616.6,465.8h1.5v1.5h-1.5zM689.4,487.3h1.5v1.5h-1.5zM707.0,423.6h1.5v1.5h-1.5zM699.1,393.5h1.5v1.5h-1.5zM613.9,400.5h1.5v1.5h-1.5zM600.7,271.6h1.5v1.5h-1.5zM704.5,242.9h1.5v1.5h-1.5zM612.4,258.8h1.5v1.5h-1.5zM718.9,282.0h1.5v1.5h-1.5zM603.2,474.0h1.5v1.5h-1.5zM616.4,474.7h1.5v1.5h-1.5zM690.9,472.5h1.5v1.5h-1.5zM728.6,397.9h1.5v1.5h-1.5zM707.8,240.5h1.5v1.5h-1.5zM703.6,378.3h1.5v1.5h-1.5zM696.5,261.0h1.5v1.5h-1.5zM701.1,501.0h1.5v1.5h-1.5zM608.3,324.0h1.5v1.5h-1.5zM676.1,470.1h1.5v1.5h-1.5zM632.7,282.1h1.5v1.5h-1.5zM633.7,408.6h1.5v1.5h-1.5zM701.7,344.2h1.5v1.5h-1.5zM649.6,345.0h1.5v1.5h-1.5zM647.3,351.3h1.5v1.5h-1.5zM611.2,375.1h1.5v1.5h-1.5zM731.4,349.7h1.5v1.5h-1.5zM700.9,276.6h1.5v1.5h-1.5zM693.3,449.3h1.5v1.5h-1.5zM691.0,380.0h1.5v1.5h-1.5zM665.3,416.5h1.5v1.5h-1.5zM721.1,273.3h1.5v1.5h-1.5zM612.9,447.0h1.5v1.5h-1.5zM723.7,380.0h1.5v1.5h-1.5zM659.8,438.5h1.5v1.5h-1.5zM625.1,307.5h1.5v1.5h-1.5zM626.9,399.8h1.5v1.5h-1.5zM642.5,297.4h1.5v1.5h-1.5zM693.3,506.5h1.5v1.5h-1.5zM639.9,434.5h1.5v1.5h-1.5zM655.8,477.6h1.5v1.5h-1.5zM678.9,307.5h1.5v1.5h-1.5zM629.4,236.7h1.5v1.5h-1.5zM664.7,341.0h1.5v1.5h-1.5zM623.3,334.5h1.5v1.5h-1.5zM643.5,454.5h1.5v1.5h-1.5zM619.4,517.5h1.5v1.5h-1.5zM664.7,403.7h1.5v1.5h-1.5zM663.2,472.0h1.5v1.5h-1.5zM710.9,391.6h1.5v1.5h-1.5zM665.0,439.0h1.5v1.5h-1.5zM715.6,346.1h1.5v1.5h-1.5zM699.0,508.5h1.5v1.5h-1.5zM663.1,296.6h1.5v1.5h-1.5zM631.7,438.1h1.5v1.5h-1.5zM691.2,508.0h1.5v1.5h-1.5zM715.3,300.2h1.5v1.5h-1.5zM625.6,305.0h1.5v1.5h-1.5zM625.3,434.4h1.5v1.5h-1.5zM715.9,490.9h1.5v1.5h-1.5zM660.4,209.8h1.5v1.5h-1.5zM665.1,143.5h1.5v1.5h-1.5zM698.3,92.9h1.5v1.5h-1.5zM647.4,205.1h1.5v1.5h-1.5zM663.3,133.5h1.5v1.5h-1.5zM686.4,181.3h1.5v1.5h-1.5zM640.6,130.2h1.5v1.5h-1.5zM674.9,152.9h1.5v1.5h-1.5zM656.8,167.8h1.5v1.5h-1.5zM716.4,138.6h1.5v1.5h-1.5zM683.5,97.9h1.5v1.5h-1.5zM662.0,179.8h1.5v1.5h-1.5zM524.8,512.9h1.5v1.5h-1.5zM699.9,323.3h1.5v1.5h-1.5zM707.1,389.8h1.5v1.5h-1.5zM669.9,481.8h1.5v1.5h-1.5zM565.0,462.2h1.5v1.5h-1.5zM643.9,493.5h1.5v1.5h-1.5zM558.4,481.0h1.5v1.5h-1.5zM711.5,461.5h1.5v1.5h-1.5zM618.0,327.2h1.5v1.5h-1.5zM608.7,384.5h1.5v1.5h-1.5zM658.0,462.9h1.5v1.5h-1.5zM624.6,343.7h1.5v1.5h-1.5zM642.0,451.4h1.5v1.5h-1.5zM539.4,513.6h1.5v1.5h-1.5zM644.2,329.6h1.5v1.5h-1.5zM705.0,333.9h1.5v1.5h-1.5zM572.9,472.9h1.5v1.5h-1.5zM631.4,433.2h1.5v1.5h-1.5zM592.4,262.0h1.5v1.5h-1.5zM575.6,242.3h1.5v1.5h-1.5zM563.4,280.1h1.5v1.5h-1.5zM597.7,268.0h1.5v1.5h-1.5zM597.0,255.1h1.5v1.5h-1.5zM573.3,256.8h1.5v1.5h-1.5zM603.6,232.9h1.5v1.5h-1.5zM585.2,247.3h1.5v1.5h-1.5zM598.4,254.8h1.5v1.5h-1.5zM576.6,258.2h1.5v1.5h-1.5z" fill="#585858"/>
<line x1="108" y1="435" x2="944" y2="435" stroke="#14283a" stroke-width="2" shape-rendering="crispEdges"/>
<polyline points="108.0,550.0 108.0,550.0 108.0,533.4 108.6,533.4 108.6,516.8 109.2,516.8 109.2,550.0 110.3,550.0 110.3,533.4 110.9,533.4 110.9,550.0 111.5,550.0 111.5,533.4 112.1,533.4 112.1,500.2 114.4,500.2 114.4,533.4 115.5,533.4 115.5,500.2 116.1,500.2 116.1,516.8 116.7,516.8 116.7,533.4 117.3,533.4 117.3,516.8 117.9,516.8 117.9,550.0 119.6,550.0 119.6,516.8 120.2,516.8 120.2,550.0 120.8,550.0 120.8,500.2 121.3,500.2 121.3,533.4 121.9,533.4 121.9,516.8 122.5,516.8 122.5,500.2 123.1,500.2 123.1,550.0" stroke="#9a22f2" stroke-width="1" fill="none"/>
<polyline points="162.0,550.0 163.2,550.0 163.2,516.8 163.7,516.8 163.7,533.4 164.3,533.4 164.3,516.8 164.9,516.8 164.9,533.4 166.1,533.4 166.1,550.0 166.6,550.0 166.6,533.4 168.4,533.4 168.4,516.8 169.0,516.8 169.0,533.4 170.7,533.4 170.7,516.8 172.4,516.8 172.4,533.4 174.8,533.4 174.8,550.0 175.3,550.0 175.3,550.0" stroke="#9a22f2" stroke-width="1" fill="none"/>
<polyline points="180.0,550.0 180.0,550.0 180.0,500.2 180.6,500.2 180.6,550.0 181.2,550.0 181.2,516.8 181.7,516.8 181.7,500.2 182.3,500.2 182.3,550.0 183.5,550.0 183.5,533.4 184.6,533.4 184.6,550.0 187.0,550.0 187.0,500.2 187.5,500.2 187.5,516.8 188.1,516.8 188.1,550.0 188.7,550.0 188.7,516.8 189.3,516.8 189.3,550.0 191.0,550.0 191.0,516.8 192.8,516.8 192.8,533.4 194.5,533.4 194.5,550.0 195.1,550.0 195.1,516.8 195.7,516.8 195.7,500.2 196.2,500.2 196.2,550.0 196.8,550.0 196.8,533.4 197.4,533.4 197.4,516.8 199.1,516.8 199.1,500.2 199.7,500.2 199.7,550.0 200.3,550.0 200.3,516.8 200.9,516.8 200.9,500.2 201.5,500.2 201.5,550.0" stroke="#9a22f2" stroke-width="1" fill="none"/>
<polyline points="226.0,550.0 226.0,550.0 226.0,500.2 227.2,500.2 227.2,516.8 227.7,516.8 227.7,500.2 228.3,500.2 228.3,533.4 228.9,533.4 228.9,516.8 230.1,516.8 230.1,533.4 230.6,533.4 230.6,550.0 234.1,550.0 234.1,533.4 234.7,533.4 234.7,550.0 235.3,550.0 235.3,533.4 235.9,533.4 235.9,550.0 236.4,550.0 236.4,533.4 237.0,533.4 237.0,550.0 237.6,550.0 237.6,500.2 238.2,500.2 238.2,516.8 238.8,516.8 238.8,550.0 239.9,550.0 239.9,533.4 240.5,533.4 240.5,550.0 241.1,550.0 241.1,516.8 241.7,516.8 241.7,533.4 242.2,533.4 242.2,550.0 244.0,550.0 244.0,516.8 245.1,516.8 245.1,550.0 246.3,550.0 246.3,533.4 246.9,533.4 246.9,516.8 247.5,516.8 247.5,533.4 248.0,533.4 248.0,516.8 248.6,516.8 248.6,550.0 249.8,550.0 249.8,533.4 250.4,533.4 250.4,500.2 250.9,500.2 250.9,550.0 252.1,550.0 252.1,550.0" stroke="#9a22f2" stroke-width="1" fill="none"/>
<polyline points="765.0,550.0 766.7,550.0 766.7,533.4 768.5,533.4 768.5,516.8 769.1,516.8 769.1,533.4 769.6,533.4 769.6,516.8 770.2,516.8 770.2,533.4 773.1,533.4 773.1,550.0 773.7,550.0 773.7,533.4 777.8,533.4 777.8,516.8 778.3,516.8 778.3,533.4 778.9,533.4 778.9,550.0 779.5,550.0 779.5,516.8 780.1,516.8 780.1,533.4 780.7,533.4 780.7,516.8 781.8,516.8 781.8,533.4 782.4,533.4 782.4,550.0 783.0,550.0 783.0,516.8 783.6,516.8 783.6,533.4 784.7,533.4 784.7,550.0 785.9,550.0 785.9,533.4 788.2,533.4 788.2,550.0 790.5,550.0 790.5,550.0" stroke="#9a22f2" stroke-width="1" fill="none"/>
<polyline points="798.0,550.0 798.0,550.0 798.0,516.8 799.2,516.8 799.2,550.0 799.7,550.0 799.7,500.2 800.3,500.2 800.3,516.8 800.9,516.8 800.9,550.0 803.2,550.0 803.2,516.8 804.4,516.8 804.4,533.4 806.1,533.4 806.1,483.6 809.0,483.6 809.0,550.0 809.6,550.0 809.6,500.2 810.2,500.2 810.2,533.4 812.5,533.4 812.5,483.6 813.1,483.6 813.1,500.2 813.7,500.2 813.7,550.0 814.8,550.0 814.8,533.4 816.0,533.4 816.0,500.2 817.1,500.2 817.1,550.0 818.9,550.0 818.9,500.2 819.5,500.2 819.5,550.0 820.0,550.0 820.0,500.2 820.6,500.2 820.6,483.6 821.2,483.6 821.2,500.2 821.8,500.2 821.8,550.0 822.4,550.0 822.4,533.4 822.9,533.4 822.9,500.2 824.7,500.2 824.7,550.0 825.8,550.0 825.8,533.4 827.0,533.4 827.0,550.0 828.7,550.0 828.7,516.8 829.3,516.8 829.3,483.6 831.1,483.6 831.1,500.2 832.8,500.2 832.8,516.8 834.0,516.8 834.0,500.2 835.7,500.2 835.7,533.4 836.9,533.4 836.9,516.8 837.4,516.8 837.4,500.2 838.0,500.2 838.0,533.4 838.6,533.4 838.6,550.0 839.2,550.0 839.2,500.2 839.8,500.2 839.8,550.0 840.3,550.0 840.3,550.0" stroke="#9a22f2" stroke-width="1" fill="none"/>
<polyline points="855.0,550.0 855.0,550.0 855.0,533.4 856.2,533.4 856.2,516.8 856.7,516.8 856.7,533.4 858.5,533.4 858.5,550.0 859.1,550.0 859.1,516.8 860.2,516.8 860.2,533.4 860.8,533.4 860.8,516.8 861.4,516.8 861.4,533.4 862.0,533.4 862.0,550.0 862.5,550.0 862.5,550.0" stroke="#9a22f2" stroke-width="1" fill="none"/>
<polyline points="903.0,550.0 903.0,550.0 903.0,483.6 903.6,483.6 903.6,533.4 904.7,533.4 904.7,500.2 905.3,500.2 905.3,550.0 905.9,550.0 905.9,516.8 907.1,516.8 907.1,550.0 908.8,550.0 908.8,500.2 909.4,500.2 909.4,550.0 910.0,550.0 910.0,533.4 911.1,533.4 911.1,550.0 911.7,550.0 911.7,500.2 912.3,500.2 912.3,516.8 912.9,516.8 912.9,533.4 913.4,533.4 913.4,550.0 914.0,550.0 914.0,533.4 914.6,533.4 914.6,483.6 915.2,483.6 915.2,533.4 915.8,533.4 915.8,483.6 916.3,483.6 916.3,516.8 916.9,516.8 916.9,550.0 917.5,550.0 917.5,533.4 918.1,533.4 918.1,516.8 921.6,516.8 921.6,550.0 922.1,550.0 922.1,516.8 922.7,516.8 922.7,533.4 923.3,533.4 923.3,500.2 923.9,500.2 923.9,516.8 924.5,516.8 924.5,483.6 925.0,483.6 925.0,533.4 925.6,533.4 925.6,550.0 929.7,550.0 929.7,533.4 931.4,533.4 931.4,550.0 932.0,550.0 932.0,500.2 933.7,500.2 933.7,516.8 934.3,516.8 934.3,483.6 937.2,483.6 937.2,550.0 938.4,550.0 938.4,500.2 940.1,500.2 940.1,483.6 940.7,483.6 940.7,533.4 941.3,533.4 941.3,550.0 942.4,550.0 942.4,516.8 944.2,516.8 944.2,550.0" stroke="#9a22f2" stroke-width="1" fill="none"/>
<polyline points="583.0,446.4 584.5,520.9 587.0,475.7 589.5,528.9 592.5,466.1 595.0,538.7 596.5,408.8 598.0,530.9 601.0,473.1 604.0,534.9 606.0,394.3 609.0,535.5 611.0,469.2 612.5,538.7 614.0,373.0 617.0,539.4 620.0,387.7 622.5,520.2 625.0,470.4 628.0,522.7 630.0,494.1 632.5,534.7 635.0,455.2 638.0,538.1 641.0,473.6 643.0,517.6 645.0,428.5 648.0,521.4 649.5,465.4 651.0,538.3 653.0,426.5 655.5,531.7 658.5,465.1 661.0,547.3 664.0,468.7 666.0,532.7 668.5,458.9 671.0,530.1 672.5,479.4 674.0,537.1 677.0,487.9 679.0,527.2 680.5,497.6 682.5,526.9 685.5,496.8 688.5,544.7 690.5,499.7 692.0,531.1 695.0,484.8 696.5,545.6 699.5,468.8 701.5,545.4 703.0,470.0 705.5,545.7 707.5,509.0 709.0,540.1 712.0,510.4 715.0,547.8 717.5,499.1" stroke="#c690ff" stroke-width="0.8" fill="none"/>
<path d="M584.5,533.4V401.0M588.5,533.4V383.7M589.5,533.4V383.7M598.5,550.0V367.1M600.5,516.8V317.6M601.5,516.8V352.0M602.5,550.0V416.9M605.5,550.0V350.5M611.5,516.8V385.6M613.5,550.0V385.6M615.5,550.0V334.5M617.5,516.8V350.5M620.5,533.4V350.5M640.5,533.4V402.2M646.5,533.4V416.2M653.5,533.4V383.0M662.5,533.4V416.2M671.5,550.0V434.2M681.5,533.4V416.2M684.5,550.0V383.0M687.5,550.0V434.2M692.5,550.0V401.0M710.5,550.0V485.6M713.5,516.8V506.2M584.5,550.0V483.6M584.5,550.0V417.2M585.5,550.0V417.2M590.5,550.0V516.8M595.5,550.0V450.4M596.5,550.0V450.4M597.5,550.0V500.2M602.5,550.0V450.4M604.5,550.0V500.2M606.5,550.0V450.4M612.5,550.0V433.8M613.5,550.0V467.0M615.5,550.0V450.4M616.5,550.0V500.2M620.5,550.0V433.8M622.5,550.0V533.4M624.5,550.0V500.2M630.5,550.0V533.4M632.5,550.0V500.2M635.5,550.0V417.2M639.5,550.0V533.4M639.5,550.0V433.8M641.5,550.0V467.0M644.5,550.0V467.0M647.5,550.0V500.2M647.5,550.0V417.2M648.5,550.0V417.2M653.5,550.0V417.2M655.5,550.0V500.2M656.5,550.0V533.4M656.5,550.0V533.4M657.5,550.0V533.4M658.5,550.0V433.8M659.5,550.0V467.0M660.5,550.0V467.0M662.5,550.0V500.2M665.5,550.0V533.4M669.5,550.0V516.8M670.5,550.0V516.8M673.5,550.0V516.8M676.5,550.0V533.4M679.5,550.0V433.8M680.5,550.0V433.8M681.5,550.0V467.0M684.5,550.0V450.4M689.5,550.0V417.2M694.5,550.0V433.8M697.5,550.0V516.8M698.5,550.0V516.8M699.5,550.0V533.4M701.5,550.0V483.6M704.5,550.0V516.8M706.5,550.0V533.4M707.5,550.0V516.8M709.5,550.0V500.2M710.5,550.0V516.8M715.5,550.0V516.8M716.5,550.0V516.8M717.5,550.0V533.4M734.5,550.0V467.0" stroke="#d2a2ff" stroke-width="1" fill="none" shape-rendering="crispEdges"/>
<path d="M583.5,550.0V401.0M587.5,550.0V350.5M588.5,550.0V350.5M597.5,550.0V350.5M599.5,550.0V301.0M600.5,550.0V352.0M601.5,550.0V383.7M604.5,550.0V350.5M610.5,550.0V369.0M612.5,550.0V369.0M614.5,550.0V334.5M616.5,550.0V350.5M619.5,550.0V350.5M639.5,550.0V369.0M645.5,550.0V383.0M652.5,550.0V383.0M661.5,550.0V383.0M670.5,550.0V401.0M680.5,550.0V383.0M683.5,550.0V383.0M686.5,550.0V401.0M691.5,550.0V401.0M709.5,550.0V469.0M712.5,550.0V473.0M583.5,550.0V450.4M586.5,550.0V516.8M589.5,550.0V483.6M592.5,550.0V467.0M600.5,550.0V533.4M608.5,550.0V516.8M610.5,550.0V433.8M614.5,550.0V450.4M619.5,550.0V417.2M621.5,550.0V533.4M627.5,550.0V533.4M638.5,550.0V500.2M646.5,550.0V500.2M650.5,550.0V500.2M661.5,550.0V483.6M664.5,550.0V516.8M667.5,550.0V467.0M671.5,550.0V516.8M680.5,550.0V433.8M683.5,550.0V433.8M686.5,550.0V417.2M687.5,550.0V533.4M692.5,550.0V483.6M696.5,550.0V500.2M703.5,550.0V483.6M705.5,550.0V500.2M712.5,550.0V483.6M733.5,550.0V450.4" stroke="#9a22f2" stroke-width="1" fill="none" shape-rendering="crispEdges"/>
<polyline points="108.6,325.9 120.7,325.9 127.6,330.0 141.4,338.7 155.0,342.2 169.0,338.7 176.0,338.7 182.9,341.1 189.8,336.2 200.0,333.5 207.0,336.2 217.4,343.8 227.8,349.0 238.0,347.2 252.0,342.2 262.3,348.0 279.6,351.4 300.0,351.8 313.8,353.2 331.0,358.7 338.0,350.1 344.9,344.9 362.0,347.2 372.5,350.8 386.3,350.1 393.2,349.0 410.5,347.2 431.2,345.6 448.5,339.7 458.8,336.2 469.2,319.7 476.0,318.0 490.0,312.8 500.3,307.6 510.4,299.0 520.7,278.2 527.6,269.6 541.4,264.4 548.3,262.0 555.2,252.2 562.0,248.9 569.0,242.0 582.9,235.1 600.0,232.2 614.0,229.9 631.2,225.8 638.0,230.6 652.0,228.2 662.3,228.9 669.2,231.6 683.0,230.6 696.8,235.1 706.9,236.2 713.8,238.6 724.2,248.9 734.5,255.8 744.9,264.5 758.7,285.2 769.0,292.1 782.9,298.3 796.7,307.6 810.5,313.5 831.3,319.0 845.0,323.2 858.9,331.8 879.6,339.8 893.4,342.2 914.2,342.9 934.9,338.7 944.0,337.7" fill="none" stroke="#f0a040" stroke-width="1.6" stroke-linejoin="round"/>
<polyline points="108.6,187.3 110.7,187.5 112.8,187.7 114.9,187.9 117.0,187.7 119.2,188.0 121.3,188.0 123.4,188.1 125.5,188.3 127.6,188.5 129.8,188.4 131.9,188.5 134.1,188.9 136.3,189.1 138.5,189.5 140.7,189.6 142.8,190.1 145.0,189.9 147.0,190.3 149.0,190.5 151.1,190.4 153.1,190.9 155.1,190.9 157.1,191.1 159.2,191.4 161.2,191.6 163.2,191.8 165.2,192.0 167.3,192.6 169.3,192.7 171.3,192.8 173.3,193.0 175.4,193.7 177.4,194.0 179.4,194.4 181.5,194.6 183.5,194.5 185.6,194.4 187.7,194.4 189.8,194.3 191.8,194.4 193.9,194.8 196.0,194.7 198.1,194.9 200.1,195.0 202.2,195.1 204.3,195.1 206.4,195.1 208.4,194.8 210.5,194.8 212.6,195.5 214.7,195.8 216.8,196.3 219.0,196.5 221.1,197.0 223.2,197.3 225.3,197.9 227.4,198.5 229.5,198.6 231.7,199.1 233.8,199.3 235.9,200.1 238.0,200.3 240.1,200.4 242.3,201.0 244.4,201.3 246.5,201.2 248.7,201.5 250.8,202.1 252.9,202.1 255.0,202.6 257.2,202.7 259.3,202.9 261.4,203.2 263.6,203.2 265.7,203.5 267.9,204.0 270.0,204.4 272.2,204.8 274.4,204.9 276.5,205.3 278.7,205.5 280.8,206.1 283.0,206.1 285.1,206.6 287.1,206.6 289.2,206.9 291.3,207.1 293.4,207.4 295.4,207.8 297.5,208.2 299.6,208.1 301.6,208.6 303.7,208.9 305.8,208.8 307.9,209.2 309.9,209.7 312.0,209.7 314.0,210.2 316.1,210.1 318.1,210.3 320.2,210.3 322.2,210.8 324.3,210.9 326.3,211.0 328.4,211.6 330.4,211.6 332.5,211.8 334.5,212.1 336.5,211.9 338.6,212.2 340.6,212.4 342.6,212.3 344.6,212.5 346.7,212.7 348.7,212.4 350.7,212.7 352.8,212.7 354.8,212.9 356.8,212.9 358.9,213.1 360.9,213.2 362.9,212.9 364.9,212.7 367.0,212.8 369.0,212.8 371.1,212.9 373.2,213.2 375.2,213.5 377.3,213.6 379.4,214.0 381.5,214.0 383.6,214.2 385.6,214.4 387.7,214.7 389.8,215.1 391.9,215.1 393.9,214.7 396.0,214.8 398.1,214.8 400.2,214.8 402.2,214.9 404.3,214.7 406.4,215.0 408.5,214.9 410.5,214.8 412.6,214.9 414.7,214.6 416.8,214.6 418.8,215.0 420.9,214.7 423.0,214.9 425.2,215.2 427.3,215.3 429.4,215.5 431.6,215.8 433.7,216.1 435.9,216.0 438.0,216.0 440.1,216.0 442.2,216.6 444.2,216.7 446.3,217.0 448.4,217.2 450.5,217.8 452.6,218.0 454.6,218.1 456.7,218.6 458.8,218.7 460.9,218.5 463.0,218.2 465.0,218.3 467.1,218.1 469.2,217.7 471.3,217.4 473.4,217.2 475.4,217.2 477.5,216.8 479.6,216.7 481.6,216.7 483.7,216.8 485.7,217.4 487.8,217.6 489.8,217.7 491.8,217.9 493.9,218.3 495.9,218.4 498.0,218.8 500.0,219.5 502.1,219.3 504.1,219.5 506.2,219.6 508.3,219.6 510.4,220.2 512.4,220.1 514.5,220.1 516.6,220.3 518.6,220.3 520.7,220.6 522.8,220.7 524.8,221.1 526.9,221.3 529.0,221.9 531.0,222.2 533.1,222.5 535.2,222.6 537.3,222.6 539.3,222.9 541.4,223.3 543.5,223.5 545.6,223.9 547.8,224.7 549.9,225.0 552.0,225.2 554.1,225.9 556.3,226.2 558.4,226.7 560.5,227.1 562.6,227.5 564.8,227.6 566.9,228.2 569.0,228.6 571.1,229.1 573.3,229.6 575.4,229.6 577.5,230.1 579.7,230.5 581.8,230.4 583.9,230.5 586.0,231.1 588.2,231.5 590.3,231.4 592.4,231.5 594.6,232.1 596.7,232.0 598.8,232.2 600.9,232.4 603.1,232.6 605.2,233.0 607.3,233.1 609.4,233.4 611.6,234.1 613.7,234.3 615.8,234.5 617.9,234.7 620.1,235.3 622.2,235.5 624.3,235.7 626.4,235.9 628.6,236.6 630.7,237.0 632.8,237.7 635.0,237.9 637.1,238.4 639.2,239.1 641.3,239.6 643.5,240.3 645.6,240.9 647.7,241.3 649.9,241.3 652.0,242.1 654.1,242.4 656.1,242.8 658.2,243.2 660.3,243.4 662.4,243.9 664.4,244.3 666.5,244.8 668.6,245.7 670.6,245.9 672.7,246.4 674.8,246.6 676.9,246.6 679.0,246.9 681.1,246.7 683.2,246.9 685.3,246.8 687.4,246.8 689.5,247.1 691.6,247.3 693.7,247.4 695.8,247.4 697.9,247.5 700.0,247.4 702.0,247.1 704.1,247.2 706.1,247.3 708.1,247.1 710.1,247.1 712.2,247.0 714.2,246.9 716.2,246.7 718.3,246.7 720.3,246.5 722.3,246.5 724.4,246.6 726.4,246.5 728.4,246.5 730.4,246.5 732.5,246.3 734.5,246.0 736.5,246.2 738.6,246.0 740.6,246.1 742.6,245.7 744.6,245.8 746.7,245.8 748.7,246.0 750.7,246.0 752.8,246.0 754.8,245.8 756.8,246.0 758.9,245.9 760.9,245.5 762.9,245.7 764.9,245.4 767.0,245.2 769.0,245.1 771.1,245.2 773.3,245.1 775.4,245.0 777.5,244.7 779.7,244.6 781.8,244.7 783.9,244.6 786.0,244.4 788.2,244.3 790.3,244.0 792.4,243.6 794.6,243.7 796.7,243.4 798.7,243.3 800.7,243.9 802.7,244.1 804.7,244.0 806.7,244.1 808.7,244.2 810.7,244.5 812.7,244.7 814.7,245.2 816.7,245.0 818.7,245.3 820.7,245.6 822.7,245.5 824.7,246.0 826.7,246.4 828.7,246.5 830.7,246.7 832.7,246.9 834.7,247.2 836.8,246.8 838.8,246.4 840.9,246.0 843.0,245.9 845.1,245.9 847.1,246.0 849.2,245.8 851.3,245.6 853.4,245.5 855.4,245.0 857.5,244.6 859.6,244.3 861.7,244.5 863.7,244.6 865.8,244.2 867.9,244.4 869.9,244.0 872.0,243.9 874.1,243.9 876.2,244.1 878.2,243.9 880.3,243.5 882.4,243.7 884.5,243.8 886.5,243.9 888.6,243.9 890.7,243.3 892.8,242.9 894.8,242.7 896.9,242.8 899.0,242.6 901.1,242.4 903.1,242.5 905.2,242.7 907.3,242.5 909.3,242.4 911.4,242.8 913.4,242.9 915.5,242.9 917.5,242.7 919.5,242.9 921.6,242.7 923.6,242.9 925.6,243.2 927.7,243.4 929.7,243.5 931.8,243.1 933.8,243.4 935.8,243.3 937.9,243.1 939.9,243.4 942.0,243.5 944.0,243.6" fill="none" stroke="#00ee22" stroke-width="2" stroke-linejoin="round"/>
<polyline points="108.0,60.0 110.3,59.3 112.7,58.7 115.0,58.0 117.5,57.0 120.0,56.0 122.0,55.5 124.0,55.0 126.0,56.3 128.0,57.7 130.0,59.0 132.0,59.5 134.0,60.0 136.0,60.0 138.0,60.0 140.0,60.0 142.0,60.0 144.0,60.0 146.0,60.0 148.0,60.0 150.5,58.0 153.0,56.0 156.0,55.0 158.0,55.0 160.0,55.0 162.0,55.0 164.0,55.0 166.0,55.0 168.0,55.0 170.0,55.0 172.0,55.0 174.0,55.0 176.0,55.0 178.0,55.0 180.0,55.0 182.0,55.0 184.0,55.0 186.0,55.0 189.0,52.0 192.0,54.0 194.0,54.0 196.0,54.0 198.0,55.0 200.0,55.0 202.0,55.0 204.0,55.0 206.0,55.0 208.0,55.0 210.0,55.0 212.0,55.0 214.0,55.0 216.0,55.0 218.0,55.0 220.0,55.0 222.0,55.0 224.0,55.0 226.0,55.0 228.0,55.0 230.0,55.0 232.0,55.0 234.0,54.0 236.0,53.0 238.0,52.0 240.0,51.0 242.0,51.5 244.0,52.0 246.0,50.8 248.0,49.5 250.0,50.8 252.0,52.0 254.0,53.0 256.0,54.0 258.0,54.0 260.0,54.0 262.0,53.0 264.0,52.0 266.0,52.5 268.0,53.0 270.0,53.7 272.0,54.3 274.0,55.0 276.0,53.5 278.0,52.0 280.0,51.0 282.0,50.0 284.0,50.0 286.0,50.0 288.0,50.0 290.0,50.0 292.0,50.0 294.0,50.0 296.0,50.0 298.0,50.0 300.0,50.0 302.0,50.0 304.0,50.0 306.0,50.0 309.0,53.0 311.0,52.0 313.0,51.0 315.3,50.7 317.7,50.3 320.0,50.0 322.0,52.0 324.5,51.0 327.0,50.0 329.0,50.0 331.0,50.0 333.1,50.0 335.1,50.0 337.1,50.0 339.1,50.0 341.1,50.0 343.1,50.0 345.2,50.0 347.2,50.0 349.2,50.0 351.2,50.0 353.2,50.0 355.2,50.0 357.3,50.0 359.3,50.0 361.3,50.0 363.3,50.0 365.3,50.0 367.3,50.0 369.4,50.0 371.4,50.0 373.4,50.0 375.4,50.0 377.4,50.0 379.4,50.0 381.5,50.0 383.5,50.0 385.5,50.0 387.5,50.0 389.5,50.0 391.5,50.0 393.6,50.0 395.6,50.0 397.6,50.0 399.6,50.0 401.6,50.0 403.6,50.0 405.7,50.0 407.7,50.0 409.7,50.0 411.7,50.0 413.7,50.0 415.7,50.0 417.8,50.0 419.8,50.0 421.8,50.0 423.8,50.0 425.8,50.0 427.8,50.0 429.9,50.0 431.9,50.0 433.9,50.0 435.9,50.0 437.9,50.0 439.9,50.0 442.0,50.0 444.0,50.0 446.0,50.0 448.0,47.0 450.0,48.0 452.0,49.0 454.0,49.0 456.0,49.0 458.0,47.5 460.0,46.0 462.0,45.3 464.0,44.7 466.0,44.0 468.3,44.0 470.7,44.0 473.0,44.0 475.0,46.0 477.0,48.0 479.5,49.0 482.0,50.0 484.1,50.0 486.2,50.0 488.4,50.0 490.5,50.0 492.6,50.0 494.8,50.0 496.9,50.0 499.0,50.0 502.0,52.0 505.0,51.0 508.0,53.0 510.0,53.5 512.0,54.3 514.0,58.5 516.0,62.8 518.0,65.1 520.0,74.6 522.0,82.5 524.0,91.4 526.0,100.7 528.0,107.8 530.0,117.8 532.0,121.0 534.0,127.3 536.0,133.2 538.0,133.3 540.0,136.0 542.0,137.0 544.5,139.9 547.0,141.8 549.5,144.4 551.8,146.6 554.0,149.6 556.0,152.6 558.0,154.2 560.0,157.8 562.3,159.3 564.6,160.8 566.6,167.2 568.6,174.3 570.6,183.0 573.1,185.6 575.5,188.3 578.0,190.8 580.0,196.9 582.0,201.8 584.0,204.8 586.0,205.0 588.0,205.2 590.0,205.8 592.0,208.8 594.0,208.1 596.0,209.0 598.0,211.1 600.0,212.3 602.0,213.4 604.0,214.0 606.0,214.7 608.0,215.8 610.2,217.8 612.5,219.5 614.8,219.3 617.0,219.7 619.2,217.9 621.5,216.4 623.8,215.7 626.0,215.5 628.0,213.1 630.0,211.5 632.0,210.4 634.0,211.2 636.0,211.6 638.0,209.9 640.0,211.2 642.0,210.0 644.0,211.5 646.0,210.7 648.0,210.2 650.0,210.5 652.0,212.0 654.0,213.5 656.0,211.6 658.0,212.4 660.0,210.7 662.0,209.8 664.0,209.1 666.0,210.3 668.0,209.9 670.0,209.8 672.0,208.1 674.0,207.6 676.0,204.7 678.0,204.5 680.0,201.4 682.0,200.9 684.0,200.8 686.0,200.0 688.0,200.1 690.0,200.8 692.0,201.6 694.0,203.3 696.0,204.0 698.0,202.8 700.0,201.3 702.2,201.7 704.5,201.0 706.5,202.3 708.5,204.0 710.5,205.7 713.0,200.4 715.5,194.2 718.0,188.7 720.2,181.1 722.5,175.3 724.8,174.5 727.0,175.6 729.0,170.1 731.0,164.5 733.0,159.0 735.2,157.2 737.5,155.3 739.8,153.4 742.0,151.6 744.0,145.1 746.0,138.5 748.0,132.0 750.5,127.0 753.1,122.0 755.6,117.0 758.1,112.5 760.5,108.1 763.0,103.6 765.0,102.6 767.0,101.6 769.0,100.6 771.0,99.1 773.0,97.6 775.0,96.1 777.0,94.6 779.0,93.1 781.0,91.6 783.0,91.1 785.0,90.5 787.0,90.0 789.0,88.8 791.0,87.5 793.0,86.3 795.0,85.1 797.0,83.8 799.0,82.6 801.2,82.1 803.5,81.5 805.8,81.0 808.0,80.5 810.0,78.9 812.0,77.2 814.0,75.6 816.0,75.6 818.0,75.6 820.0,75.6 822.0,75.6 824.0,75.6 826.0,75.6 828.0,75.6 830.0,75.6 832.0,75.6 834.5,73.9 837.1,72.2 839.6,70.5 842.1,71.5 844.5,72.5 847.0,73.5 849.0,72.3 851.0,71.2 853.0,70.0 855.6,69.2 858.1,68.3 860.7,67.5 862.9,68.8 865.0,70.0 867.0,68.5 869.0,66.9 871.0,65.4 873.2,65.4 875.4,65.4 877.6,65.4 879.8,65.4 881.9,65.4 884.1,65.4 886.3,65.4 888.5,65.4 890.7,65.4 893.1,63.6 895.6,61.8 898.0,60.0 900.1,60.0 902.1,60.0 904.2,60.0 906.2,60.0 908.3,60.0 910.4,60.0 912.4,60.0 914.5,60.0 916.6,60.0 918.6,60.0 920.7,60.0 922.8,60.0 924.8,60.0 926.9,60.0 928.9,60.0 931.0,60.0 933.6,58.8 936.1,57.6 938.7,56.4 940.9,57.5 943.0,58.5" fill="none" stroke="#8b4a13" stroke-width="2" stroke-linejoin="round"/>
<polyline points="108.6,332.9 110.9,333.7 113.2,334.7 115.5,333.7 117.8,334.3 120.1,333.3 122.4,333.0 124.6,335.6 126.7,335.9 128.8,336.4 131.0,337.7 133.0,338.2 135.0,340.0 137.0,340.7 139.0,341.5 141.0,343.0 143.0,344.6 145.0,347.2 147.3,346.0 149.6,347.0 151.8,348.3 154.1,348.7 156.4,347.5 158.7,346.8 161.0,346.1 163.3,344.4 165.6,345.7 167.9,345.6 170.2,345.3 172.5,344.4 174.6,345.8 176.7,345.3 178.8,344.3 180.9,344.7 183.0,345.4 185.1,345.6 187.2,343.3 189.4,343.8 191.5,342.4 193.6,340.4 195.8,340.4 197.9,340.7 200.0,339.9 202.0,341.2 204.0,341.6 206.0,342.1 208.0,341.8 210.0,344.3 212.0,345.4 214.0,345.2 216.1,345.7 218.2,347.3 220.4,349.1 222.5,351.2 224.6,351.6 226.8,352.5 228.9,353.8 231.0,353.3 233.0,354.4 235.0,353.3 237.0,354.1 239.0,354.1 241.0,353.8 243.0,351.7 245.0,351.0 247.3,349.9 249.7,348.4 252.0,347.5 254.3,348.2 256.6,349.9 258.9,351.7 261.1,353.1 263.4,354.8 265.7,356.2 268.0,355.4 270.3,355.8 272.6,356.4 275.0,355.0 277.3,355.8 279.6,355.8 281.6,354.9 283.7,354.8 285.7,356.1 287.8,356.5 289.8,356.5 291.8,357.5 293.9,357.3 295.9,355.7 298.0,356.4 300.0,356.5 302.1,357.5 304.2,357.7 306.4,358.3 308.5,356.9 310.6,357.8 312.8,357.2 314.9,356.7 317.0,358.1 319.3,359.5 321.5,360.8 323.8,360.2 326.0,361.7 328.3,362.0 330.5,362.4 332.8,363.2 334.9,360.4 337.1,355.6 339.2,352.9 341.4,350.0 343.5,350.1 345.6,349.3 347.6,350.4 349.7,349.0 351.8,349.7 353.9,349.0 356.1,348.5 358.2,348.3 360.4,350.4 362.6,349.6 364.7,349.9 366.9,351.5 369.0,351.4 371.1,353.0 373.2,353.7 375.2,353.3 377.3,353.7 379.4,354.4 381.5,354.5 383.6,355.3 385.6,354.3 387.7,354.4 389.8,353.7 392.1,352.2 394.4,353.1 396.7,352.4 399.0,351.0 401.3,351.5 403.6,352.1 405.7,350.8 407.8,350.6 410.0,351.9 412.1,351.9 414.2,350.4 416.3,351.3 418.5,350.5 420.6,350.3 422.7,351.6 424.8,352.4 427.0,350.4 429.1,349.2 431.2,350.0 433.5,349.1 435.8,347.8 438.1,347.1 440.4,347.9 442.7,346.3 445.0,346.1 447.3,345.1 449.6,343.6 451.9,342.7 454.2,342.2 456.5,340.1 458.8,339.7 461.1,335.5 463.4,331.6 465.8,328.3 468.1,325.6 470.4,322.9 472.7,320.3 475.0,319.4 477.3,320.5 479.6,320.3 481.9,321.0 484.2,320.5 486.5,319.2 488.8,319.3 491.1,317.9 493.4,316.0 495.7,315.0 498.0,313.8 500.3,313.0 502.3,310.0 504.3,309.4 506.4,307.3 508.4,305.2 510.4,302.0 512.7,300.5 514.9,300.6 517.2,299.3 519.5,298.4 521.7,297.5 524.0,295.9 526.0,295.4 528.0,295.4 530.0,297.9 532.0,299.0 534.0,300.6 536.0,301.6 538.0,302.3 540.2,300.4 542.4,299.8 544.6,298.5 546.9,297.3 549.1,295.8 551.3,295.2 553.5,294.9 555.6,296.5 557.8,298.0 559.9,297.0 562.0,298.1 564.2,297.9 566.4,297.6 568.5,298.4 570.7,297.7 572.9,297.5 575.0,299.2 577.2,300.6 579.4,300.9 581.5,302.2 583.5,303.6 585.6,302.7 587.6,302.7 589.7,303.7 591.8,303.9 593.8,305.5 595.9,306.2 597.9,306.2 600.0,308.2 602.2,307.0 604.4,307.0 606.5,307.1 608.7,307.4 610.9,305.5 613.0,304.8 615.2,305.9 617.4,305.3 619.7,304.0 622.0,303.4 624.3,303.1 626.6,302.6 628.9,301.2 631.2,300.8 633.3,300.1 635.4,301.4 637.4,302.6 639.5,301.7 641.6,301.5 643.7,302.9 645.8,303.8 647.8,302.9 649.9,303.8 652.0,303.8 654.1,302.4 656.2,303.4 658.4,302.3 660.5,302.3 662.6,301.6 664.7,302.4 666.9,302.1 669.0,303.2 671.1,301.3 673.2,301.3 675.4,301.8 677.5,300.4 679.6,301.0 681.8,300.5 683.9,301.9 686.0,301.7 688.2,301.9 690.4,303.8 692.5,305.8 694.6,306.5 696.8,305.8 699.1,306.9 701.3,305.8 703.6,307.3 705.9,306.8 708.1,307.5 710.4,306.4 712.5,305.5 714.5,305.8 716.6,305.8 718.6,305.5 720.7,304.4 722.8,303.9 724.8,303.4 726.9,303.2 728.9,302.1 731.0,303.2 733.2,302.8 735.4,302.2 737.5,302.2 739.7,302.6 741.9,302.8 744.0,303.7 746.2,305.3 748.4,305.0 750.7,305.7 753.0,308.0 755.3,310.0 757.6,310.6 759.9,312.2 762.2,312.4 764.3,313.3 766.3,314.1 768.4,313.2 770.5,314.4 772.5,314.8 774.6,315.8 776.7,317.3 778.8,317.7 780.8,317.6 782.9,319.0 785.0,318.7 787.0,318.1 789.1,319.3 791.2,321.1 793.2,321.7 795.3,322.8 797.4,323.3 799.5,324.0 801.5,325.0 803.6,326.0 805.9,325.6 808.2,326.4 810.5,326.6 812.8,326.4 815.1,326.4 817.4,326.3 819.5,326.6 821.6,326.6 823.6,328.5 825.7,329.5 827.8,330.8 829.9,329.9 832.0,330.9 834.0,330.4 836.1,330.8 838.2,330.9 840.5,332.8 842.8,334.3 845.1,333.6 847.4,333.1 849.7,333.7 852.0,335.5 854.1,335.6 856.1,337.7 858.2,339.0 860.3,338.7 862.4,341.2 864.4,340.6 866.5,341.0 868.6,342.1 870.6,343.2 872.7,344.8 874.9,345.8 877.0,346.4 879.2,348.4 881.4,349.7 883.5,349.2 885.7,350.3 887.8,351.3 890.0,351.2 892.2,351.9 894.3,351.9 896.5,351.0 898.6,350.9 900.8,349.7 903.0,349.2 905.1,349.4 907.3,349.8 909.4,348.4 911.6,349.9 913.8,349.5 915.9,348.3 918.0,349.9 920.2,349.6 922.4,348.9 924.5,349.2 926.7,347.3 928.8,346.3 931.0,347.7 933.2,346.7 935.3,346.0 937.5,345.9 939.7,345.1 941.8,343.8 944.0,344.4" fill="none" stroke="#167a3a" stroke-width="2" stroke-linejoin="round"/>
<polyline points="108.6,344.0 110.9,343.2 113.2,343.0 115.5,342.1 117.6,344.4 119.8,345.6 121.9,347.6 124.0,349.2 126.3,352.2 128.7,355.5 131.0,359.1 133.2,360.8 135.3,362.9 137.5,364.9 139.7,366.3 141.8,367.5 143.8,368.3 145.9,369.6 148.0,370.3 150.2,369.0 152.5,367.9 154.8,367.8 157.0,367.0 159.2,366.6 161.3,366.2 163.4,365.6 165.6,364.7 167.9,365.3 170.2,365.6 172.5,366.1 174.8,366.0 177.1,365.5 179.4,365.6 181.6,365.5 183.8,365.3 186.0,364.8 188.8,360.4 191.5,356.2 193.6,355.7 195.8,354.0 197.9,352.5 200.0,352.2 202.3,353.1 204.7,353.3 207.0,354.1 209.3,358.2 211.7,362.5 214.0,367.0 216.3,370.0 218.6,372.4 220.9,375.6 223.1,376.2 225.2,376.7 227.3,376.9 229.5,377.4 231.8,375.6 234.1,373.0 236.4,370.5 238.4,369.8 240.4,368.6 242.4,367.2 244.5,366.7 246.5,365.4 248.5,363.9 250.8,363.8 253.1,363.7 255.4,364.2 257.7,364.2 260.0,365.0 262.3,364.7 264.6,368.1 266.9,371.0 269.2,374.3 271.5,375.1 273.7,375.9 276.0,377.4 278.6,374.2 281.3,370.9 283.3,370.4 285.4,370.4 287.4,370.5 289.4,370.7 291.5,370.6 293.5,369.9 295.6,370.3 297.6,370.2 299.6,370.1 301.7,370.4 303.7,370.8 306.9,374.0 308.9,376.1 310.9,378.0 313.0,379.6 315.0,381.6 317.0,383.1 319.0,383.7 321.0,383.1 323.0,383.0 325.0,382.9 327.0,383.7 329.0,383.4 331.0,383.3 333.3,381.1 335.7,378.6 338.0,376.8 340.1,373.6 342.1,370.8 344.2,367.2 346.2,364.5 348.3,361.1 350.5,361.4 352.6,362.0 354.8,362.1 357.0,362.5 359.1,363.2 361.3,364.2 363.4,364.1 365.6,364.8 367.9,366.0 370.2,367.3 372.5,368.0 374.6,368.4 376.7,367.9 378.7,367.5 380.8,366.9 382.9,366.9 385.2,368.0 387.5,368.6 389.8,369.7 391.8,367.2 393.9,365.3 395.9,363.0 398.0,361.4 400.0,359.2 402.2,358.8 404.4,357.8 406.5,356.6 408.7,355.4 410.9,354.4 413.0,354.3 415.2,353.4 417.4,352.5 419.4,352.9 421.4,352.4 423.4,352.4 425.5,352.6 427.5,353.0 429.5,352.1 431.5,352.3 433.5,352.2 435.6,352.5 437.6,352.6 439.6,352.3 441.6,352.1 443.7,350.4 445.8,348.3 447.8,345.4 449.9,343.7 452.0,340.8 454.1,339.5 456.1,337.1 458.2,335.9 460.2,334.6 462.3,332.5 464.6,330.0 466.9,326.9 469.1,323.6 471.4,320.8 473.7,317.2 476.0,314.6 478.0,313.7 480.0,312.2 482.0,311.6 484.0,310.4 486.0,309.1 488.0,307.6 490.0,306.2 492.3,303.0 494.5,299.9 496.8,295.9 498.9,295.2 501.0,294.7 503.0,294.4 505.1,294.4 507.2,294.7 509.4,291.1 511.6,287.9 513.8,283.8 515.8,281.1 517.9,278.8 519.9,275.3 522.0,272.2 524.0,269.1 527.6,255.3 530.2,234.9 532.8,214.7 536.3,179.9 539.1,165.3 542.0,149.6 545.0,137.5 548.0,155.7 551.0,135.4 554.0,113.7 556.0,111.7 558.0,108.6 560.0,105.9 562.0,100.2 564.0,94.8 566.0,88.6 569.0,90.1 572.0,102.2 574.3,99.5 576.6,97.6 579.6,83.6 581.8,87.1 584.0,89.7 586.3,90.8 588.6,92.4 590.8,112.3 593.0,132.2 596.0,180.7 598.4,208.4 601.0,222.5 603.6,237.7 607.0,242.3 609.0,243.0 611.0,242.8 613.0,242.6 615.1,243.5 617.1,244.3 619.1,244.0 621.1,244.5 623.1,245.0 625.2,245.5 627.2,245.8 629.2,245.6 631.2,245.5 633.3,245.8 635.3,245.7 637.4,246.4 639.5,246.4 641.6,246.6 643.6,246.4 645.7,247.2 647.8,247.6 649.9,247.7 651.9,248.4 654.0,249.0 656.1,249.6 658.2,249.2 660.2,249.0 662.3,249.4 664.6,251.5 666.9,253.4 669.2,255.3 672.7,250.2 676.0,256.1 678.1,256.2 680.2,255.8 682.2,256.2 684.3,256.6 686.4,255.8 688.5,255.6 690.6,256.1 692.6,256.5 694.7,256.7 696.8,256.7 699.1,258.1 701.4,259.3 703.7,260.7 705.7,261.9 707.7,261.8 709.8,262.4 711.8,263.0 713.8,263.0 716.1,265.5 718.4,268.2 720.7,269.9 723.0,272.4 725.3,274.9 727.6,277.0 729.9,278.2 732.2,279.8 734.5,281.6 736.9,283.7 739.2,285.3 741.5,286.9 743.6,291.5 745.6,295.6 747.7,300.4 749.7,304.8 751.8,309.9 753.9,312.0 756.0,313.4 758.0,314.5 760.1,316.3 762.2,318.1 764.3,319.1 766.3,320.7 768.4,322.6 770.4,324.5 772.5,325.9 774.7,326.3 776.8,327.0 779.0,327.8 781.1,327.7 783.3,328.2 785.5,329.0 787.6,329.5 789.8,330.8 792.1,333.6 794.4,336.0 796.7,339.1 799.0,337.7 801.3,337.2 803.6,335.9 805.7,337.0 807.8,337.1 809.8,337.8 811.9,338.9 814.0,339.4 816.1,339.1 818.2,339.3 820.4,339.8 822.5,339.2 824.6,338.8 826.7,339.3 828.9,339.7 831.0,340.1 833.1,339.3 835.2,339.0 837.4,339.6 839.5,339.8 841.6,339.0 843.7,343.0 845.8,345.8 847.8,349.4 849.9,353.2 852.0,356.1 854.2,356.7 856.3,357.7 858.5,357.6 860.6,358.0 862.8,358.8 865.0,359.2 867.1,359.6 869.3,359.9 871.6,361.8 873.9,363.5 876.2,365.3 878.4,366.2 880.5,367.1 882.6,366.9 884.8,368.0 887.0,368.1 889.1,368.3 891.2,369.3 893.4,370.0 895.5,369.6 897.6,369.5 899.6,369.8 901.7,369.6 903.8,369.7 905.9,369.6 908.0,369.9 910.0,370.3 912.1,370.4 914.2,370.3 916.5,367.9 918.8,366.2 921.1,364.0 923.4,362.2 925.7,360.8 928.0,359.1 930.0,358.3 932.0,356.9 934.0,356.7 936.0,355.9 938.0,355.4 940.0,354.7 942.0,354.2 944.0,353.0" fill="none" stroke="#ee1122" stroke-width="2" stroke-linejoin="round"/>
<polyline points="108.6,324.5 110.6,325.1 112.6,324.6 114.7,324.4 116.7,324.4 118.7,324.2 120.7,324.2 123.0,326.2 125.3,327.5 127.6,328.3 129.9,330.4 132.2,331.5 134.5,333.3 136.8,334.2 139.1,336.0 141.4,337.6 143.7,338.3 145.9,339.3 148.2,340.0 150.5,340.1 152.7,340.5 155.0,340.5 157.0,340.4 159.0,339.8 161.0,338.9 163.0,338.8 165.0,338.7 167.0,337.6 169.0,337.5 171.3,337.7 173.7,337.2 176.0,337.6 178.3,337.9 180.6,338.3 182.9,339.8 185.2,338.7 187.5,336.9 189.8,335.7 191.8,335.0 193.9,334.7 195.9,333.8 198.0,333.0 200.0,332.9 202.3,333.7 204.7,334.3 207.0,335.6 209.1,337.2 211.2,338.8 213.2,339.8 215.3,341.8 217.4,343.1 219.5,343.6 221.6,344.7 223.6,345.8 225.7,346.4 227.8,347.1 229.8,347.2 231.9,347.0 233.9,346.2 236.0,346.1 238.0,345.7 240.0,345.4 242.0,344.9 244.0,343.5 246.0,343.0 248.0,341.8 250.0,340.8 252.0,340.1 254.1,342.1 256.1,343.6 258.2,344.8 260.2,345.6 262.3,347.1 264.5,346.9 266.6,347.5 268.8,347.5 271.0,347.6 273.1,348.9 275.3,349.1 277.4,349.2 279.6,349.8 281.6,350.5 283.7,350.6 285.7,350.0 287.8,350.1 289.8,350.8 291.8,350.6 293.9,350.5 295.9,350.7 298.0,351.2 300.0,351.4 302.3,351.0 304.6,351.3 306.9,351.5 309.2,351.3 311.5,351.2 313.8,351.3 315.9,351.9 318.1,352.7 320.2,354.0 322.4,354.3 324.6,355.2 326.7,356.6 328.9,357.5 331.0,357.8 333.3,354.2 335.7,351.6 338.0,349.0 340.3,347.4 342.6,345.9 344.9,343.9 347.0,344.1 349.2,344.6 351.3,344.4 353.4,344.6 355.6,345.3 357.7,345.4 359.9,345.7 362.0,345.5 364.1,347.0 366.2,347.3 368.3,348.4 370.4,349.0 372.5,350.0 374.8,350.0 377.1,349.6 379.4,350.0 381.7,350.0 384.0,349.8 386.3,349.5 388.6,348.5 390.9,347.6 393.2,347.9 395.4,347.4 397.5,347.2 399.7,347.0 401.9,346.6 404.0,346.9 406.2,346.8 408.3,346.0 410.5,346.4 412.6,345.6 414.6,345.9 416.7,345.1 418.8,345.7 420.9,345.7 422.9,345.4 425.0,345.0 427.1,345.3 429.1,344.6 431.2,344.5 433.4,343.3 435.5,342.3 437.7,341.3 439.9,340.5 442.0,339.6 444.2,339.1 446.3,338.3 448.5,337.8 450.6,337.6 452.6,337.3 454.7,336.3 456.7,335.7 458.8,334.9 460.9,331.8 463.0,328.0 465.0,324.9 467.1,321.7 469.2,318.1 471.5,317.8 473.7,317.5 476.0,316.6 478.0,316.0 480.0,315.2 482.0,314.6 484.0,314.1 486.0,313.8 488.0,312.7 490.0,311.8 492.1,310.1 494.1,309.5 496.2,308.7 498.2,307.1 500.3,305.7 502.3,304.1 504.3,302.4 506.4,301.3 508.4,299.2 510.4,298.1 512.5,293.6 514.5,289.3 516.6,285.8 518.6,281.9 520.7,277.8 523.0,274.4 525.3,271.3 527.6,268.5 529.9,267.8 532.2,267.0 534.5,266.1 536.8,264.7 539.1,264.3 541.4,263.3 543.7,263.0 546.0,261.4 548.3,260.8 550.6,257.0 552.9,253.4 555.2,250.8 557.5,249.2 559.7,248.7 562.0,247.2 564.3,245.0 566.7,243.1 569.0,241.1 571.3,239.5 573.6,238.3 576.0,237.4 578.3,236.2 580.6,235.2 582.9,234.2 585.0,233.8 587.2,233.4 589.3,232.5 591.5,232.5 593.6,232.2 595.7,231.8 597.9,231.7 600.0,231.1 602.0,230.7 604.0,230.7 606.0,229.7 608.0,230.0 610.0,230.1 612.0,229.8 614.0,229.5 616.1,228.3 618.3,228.2 620.5,227.9 622.6,227.2 624.8,226.6 626.9,226.5 629.1,226.0 631.2,225.7 633.5,227.4 635.7,228.1 638.0,229.0 640.0,229.1 642.0,229.3 644.0,228.9 646.0,227.9 648.0,228.2 650.0,227.4 652.0,227.3 654.1,227.0 656.1,226.7 658.2,227.4 660.2,227.5 662.3,227.9 664.6,228.9 666.9,229.6 669.2,230.5 671.5,230.0 673.8,230.3 676.1,229.8 678.4,229.5 680.7,229.9 683.0,229.5 685.3,230.0 687.6,231.2 689.9,232.0 692.2,233.1 694.5,233.2 696.8,234.3 698.8,234.2 700.8,234.2 702.9,234.5 704.9,234.4 706.9,235.1 709.2,235.8 711.5,236.0 713.8,237.5 715.9,239.1 718.0,241.4 720.0,243.3 722.1,245.7 724.2,247.2 726.3,248.6 728.3,249.8 730.4,251.4 732.4,252.9 734.5,254.7 736.6,256.5 738.7,258.0 740.7,259.7 742.8,261.7 744.9,263.3 747.2,266.9 749.5,270.2 751.8,273.7 754.1,277.0 756.4,280.8 758.7,284.7 760.8,285.6 762.8,286.7 764.9,287.9 766.9,289.2 769.0,290.3 771.3,292.0 773.6,293.5 776.0,293.9 778.3,294.4 780.6,296.1 782.9,296.6 785.2,298.3 787.5,299.8 789.8,301.1 792.1,302.5 794.4,304.9 796.7,306.3 799.0,307.8 801.3,309.1 803.6,310.2 805.9,310.3 808.2,311.5 810.5,312.5 812.6,313.6 814.7,313.5 816.7,314.5 818.8,314.9 820.9,314.8 823.0,315.0 825.1,316.2 827.1,316.2 829.2,317.3 831.3,318.2 833.6,319.3 835.9,320.3 838.1,320.7 840.4,321.5 842.7,322.2 845.0,322.6 847.3,324.1 849.6,325.6 852.0,326.7 854.3,327.6 856.6,328.8 858.9,330.9 861.0,331.1 863.0,332.4 865.1,332.6 867.2,334.0 869.2,334.4 871.3,335.2 873.4,336.5 875.5,336.9 877.5,338.2 879.6,338.9 881.9,339.4 884.2,339.7 886.5,340.4 888.8,340.2 891.1,340.7 893.4,340.5 895.5,340.3 897.6,340.4 899.6,340.7 901.7,341.1 903.8,341.0 905.9,341.7 908.0,341.4 910.0,342.0 912.1,342.1 914.2,342.2 916.3,341.2 918.3,340.6 920.4,340.5 922.5,340.1 924.5,339.3 926.6,339.1 928.7,338.9 930.8,338.0 932.8,337.5 934.9,337.5 937.2,337.8 939.5,337.1 941.7,336.8 944.0,336.5" fill="none" stroke="#1a22ee" stroke-width="2" stroke-linejoin="round"/>
<polyline points="583.0,550.0 584.0,535.0 589.0,502.0 593.0,502.0 596.4,535.4 602.0,469.0 611.0,515.0 616.0,484.4 620.0,516.0 627.5,517.5 630.0,545.6 631.4,535.4 636.8,535.4 637.8,535.4 640.6,535.4 641.6,517.5 644.4,517.5 645.4,517.5 647.0,517.5 648.0,543.0 652.0,543.0 653.0,517.5 656.0,517.5 657.0,543.0 662.0,543.0 663.0,535.4 670.0,535.4 671.0,535.4 677.6,535.4 678.6,517.5 686.5,517.5 687.5,517.5 690.0,535.4 699.0,535.4 700.0,535.4 703.0,535.4 704.0,545.6" fill="none" stroke="#111" stroke-width="1"/>
<polyline points="920.0,550.0 922.0,535.4 933.5,535.4 936.0,550.0" fill="none" stroke="#111" stroke-width="1"/>
<line x1="108" y1="549.5" x2="944" y2="549.5" stroke="#2aa8c8" stroke-width="1" shape-rendering="crispEdges"/>
<line x1="510" y1="547" x2="944" y2="547" stroke="#22ddff" stroke-width="2" shape-rendering="crispEdges"/>
<line x1="107" y1="34.5" x2="945" y2="34.5" stroke="#6a6a6a" stroke-width="1" shape-rendering="crispEdges"/>
<line x1="107.5" y1="34" x2="107.5" y2="550" stroke="#808080" stroke-width="2" shape-rendering="crispEdges"/>
<line x1="945" y1="34" x2="945" y2="550" stroke="#5a5a5a" stroke-width="2" shape-rendering="crispEdges"/>
<text transform="translate(26.8,571.5) scale(0.87,1)" font-size="9" fill="#2a2a2a" text-anchor="end">11:26</text>
<path d="M28.5,571 a3.5,3 0 0,1 7,0 z" fill="#ffdd00"/>
<path d="M181,564 h3 l-1,3 h1 l-2,3 z" fill="#f0e000" stroke="#8a8a00" stroke-width="0.4"/>
<rect x="184" y="569" width="1" height="1" fill="#4444ff"/><rect x="186" y="569" width="1" height="1" fill="#4444ff"/>
<text transform="translate(187.5,571.5) scale(0.87,1)" font-size="9" fill="#2a2a2a" text-anchor="start">02:06</text>
<text transform="translate(366.0,571.5) scale(0.87,1)" font-size="9" fill="#2a2a2a" text-anchor="end">07:31</text>
<circle cx="371" cy="567.5" r="2.5" fill="#ffee00"/>
<line x1="370.5" y1="544" x2="370.5" y2="552" stroke="#eedd00" stroke-width="1" shape-rendering="crispEdges"/>
<line x1="180.5" y1="546" x2="180.5" y2="556" stroke="#555" stroke-width="1" shape-rendering="crispEdges"/>
<path d="M694,570 l2.5,-5 2,5 z" fill="#f2d000"/>
<text transform="translate(699.0,571.5) scale(0.87,1)" font-size="9" fill="#2a2a2a" text-anchor="start">16:49</text>
<text transform="translate(765.0,571.5) scale(0.87,1)" font-size="9" fill="#2a2a2a" text-anchor="end">18:58</text>
<rect x="767.5" y="566.5" width="4" height="4" fill="none" stroke="#f4ee70" stroke-width="1"/>
<line x1="768.5" y1="544" x2="768.5" y2="553" stroke="#eedd00" stroke-width="1" shape-rendering="crispEdges"/>
<line x1="692.5" y1="546" x2="692.5" y2="556" stroke="#555" stroke-width="1" shape-rendering="crispEdges"/>
<rect x="0" y="572.5" width="1024" height="29" fill="#dcd8dc"/>
<rect x="1" y="574" width="1021" height="26" fill="#04ff0e"/>
<rect x="62" y="574" width="2" height="26" fill="#dcd8dc"/>
<rect x="146" y="574" width="2" height="26" fill="#dcd8dc"/>
<rect x="230" y="574" width="2" height="26" fill="#dcd8dc"/>
<rect x="315" y="574" width="2" height="26" fill="#dcd8dc"/>
<rect x="399" y="574" width="2" height="26" fill="#dcd8dc"/>
<text x="5.0" y="583.8" font-size="8" fill="#0a2828" text-anchor="start">Wetterdaten</text>
<text x="5.0" y="595.6" font-size="8" fill="#0a2828" text-anchor="start">04.10.14 23:59</text>
<text x="67.0" y="584.0" font-size="8" fill="#0a2828" text-anchor="start">Temp. I.</text>
<text x="142.0" y="584.0" font-size="8" fill="#0a2828" text-anchor="end">22.2 °C</text>
<text x="67.0" y="595.5" font-size="8" fill="#0a2828" text-anchor="start">Feuchte I.</text>
<text x="142.0" y="595.5" font-size="8" fill="#0a2828" text-anchor="end">49 %</text>
<text x="150.0" y="584.0" font-size="8" fill="#0a2828" text-anchor="start">Temp. 2m</text>
<text x="225.0" y="584.0" font-size="8" fill="#0a2828" text-anchor="end">8.6 °C</text>
<text x="150.0" y="595.5" font-size="8" fill="#0a2828" text-anchor="start">Feuchte A.</text>
<text x="225.0" y="595.5" font-size="8" fill="#0a2828" text-anchor="end">95 %</text>
<text x="236.0" y="584.0" font-size="8" fill="#0a2828" text-anchor="start">Luftdruck</text>
<text x="311.0" y="584.0" font-size="8" fill="#0a2828" text-anchor="end">1015.6 hPa</text>
<text x="236.0" y="595.5" font-size="8" fill="#0a2828" text-anchor="start">Regen</text>
<text x="311.0" y="595.5" font-size="8" fill="#0a2828" text-anchor="end">0.0 l/m²</text>
<text x="320.0" y="584.0" font-size="8" fill="#0a2828" text-anchor="start">Wind</text>
<text x="395.0" y="584.0" font-size="8" fill="#0a2828" text-anchor="end">0.0 km/h</text>
<text x="320.0" y="595.5" font-size="8" fill="#0a2828" text-anchor="start">Richtung</text>
<text x="395.0" y="595.5" font-size="8" fill="#0a2828" text-anchor="end">NO</text>
<text x="786.0" y="584.0" font-size="8" fill="#0a2828" text-anchor="start">WR 47°</text>
<text x="786.0" y="595.5" font-size="8" fill="#0a2828" text-anchor="start">WC 8.6°C</text>
<text x="836.0" y="584.0" font-size="8" fill="#0a2828" text-anchor="start">Solar</text>
<text x="919.0" y="584.0" font-size="8" fill="#0a2828" text-anchor="end">0 W/m²</text>
<text x="836.0" y="595.5" font-size="8" fill="#0a2828" text-anchor="start">ET</text>
<text x="913.0" y="595.5" font-size="8" fill="#0a2828" text-anchor="end">0.000 mm</text>
<text x="936.0" y="584.0" font-size="8" fill="#0a2828" text-anchor="start">UV</text>
<text x="1019.0" y="584.0" font-size="8" fill="#0a2828" text-anchor="end">0.0 UV-I</text>
<text x="936.0" y="595.5" font-size="8" fill="#0a2828" text-anchor="start">Taupunkt</text>
<text x="1012.0" y="595.5" font-size="8" fill="#0a2828" text-anchor="end">7.8 °C</text>
<defs><linearGradient id="sky" x1="0" y1="0" x2="0" y2="1"><stop offset="0" stop-color="#3f78b4"/><stop offset="1" stop-color="#6aa4d4"/></linearGradient></defs>
<rect x="402" y="575" width="24" height="24" fill="url(#sky)"/>
<rect x="402" y="575" width="1" height="24" fill="#1a3050"/><rect x="402" y="575" width="24" height="1" fill="#1a3050"/>
<path d="M411,579 l1,3 3,-1 -2,3 2,2 -3,0 -1,3 -1,-3 -3,0 2,-2 -2,-3 3,1 z" fill="#ffe020"/>
<ellipse cx="413" cy="588.5" rx="8.5" ry="3.2" fill="#eef4f6"/>
<ellipse cx="418.5" cy="594.5" rx="4.5" ry="1.8" fill="#e4eef2"/>
<defs><pattern id="dith" width="36" height="36" patternUnits="userSpaceOnUse"><rect width="36" height="36" fill="#d6880c"/><path d="M0,0h1v1h-1zM2,0h1v1h-1zM4,0h1v1h-1zM8,0h1v1h-1zM10,0h1v1h-1zM14,0h1v1h-1zM18,0h1v1h-1zM20,0h1v1h-1zM22,0h1v1h-1zM28,0h1v1h-1zM30,0h1v1h-1zM32,0h1v1h-1zM34,0h1v1h-1zM1,1h1v1h-1zM11,1h1v1h-1zM13,1h1v1h-1zM15,1h1v1h-1zM19,1h1v1h-1zM21,1h1v1h-1zM23,1h1v1h-1zM25,1h1v1h-1zM27,1h1v1h-1zM29,1h1v1h-1zM33,1h1v1h-1zM2,2h1v1h-1zM4,2h1v1h-1zM8,2h1v1h-1zM10,2h1v1h-1zM14,2h1v1h-1zM18,2h1v1h-1zM20,2h1v1h-1zM24,2h1v1h-1zM26,2h1v1h-1zM28,2h1v1h-1zM30,2h1v1h-1zM32,2h1v1h-1zM34,2h1v1h-1zM5,3h1v1h-1zM11,3h1v1h-1zM13,3h1v1h-1zM15,3h1v1h-1zM21,3h1v1h-1zM23,3h1v1h-1zM27,3h1v1h-1zM29,3h1v1h-1zM35,3h1v1h-1zM4,4h1v1h-1zM6,4h1v1h-1zM8,4h1v1h-1zM12,4h1v1h-1zM14,4h1v1h-1zM18,4h1v1h-1zM20,4h1v1h-1zM24,4h1v1h-1zM32,4h1v1h-1zM34,4h1v1h-1zM3,5h1v1h-1zM5,5h1v1h-1zM7,5h1v1h-1zM11,5h1v1h-1zM13,5h1v1h-1zM15,5h1v1h-1zM17,5h1v1h-1zM21,5h1v1h-1zM23,5h1v1h-1zM31,5h1v1h-1zM33,5h1v1h-1zM0,6h1v1h-1zM4,6h1v1h-1zM6,6h1v1h-1zM12,6h1v1h-1zM14,6h1v1h-1zM18,6h1v1h-1zM20,6h1v1h-1zM24,6h1v1h-1zM30,6h1v1h-1zM32,6h1v1h-1zM34,6h1v1h-1zM1,7h1v1h-1zM5,7h1v1h-1zM11,7h1v1h-1zM13,7h1v1h-1zM15,7h1v1h-1zM17,7h1v1h-1zM23,7h1v1h-1zM25,7h1v1h-1zM31,7h1v1h-1zM35,7h1v1h-1zM6,8h1v1h-1zM8,8h1v1h-1zM10,8h1v1h-1zM14,8h1v1h-1zM16,8h1v1h-1zM18,8h1v1h-1zM22,8h1v1h-1zM24,8h1v1h-1zM26,8h1v1h-1zM32,8h1v1h-1zM34,8h1v1h-1zM5,9h1v1h-1zM9,9h1v1h-1zM15,9h1v1h-1zM17,9h1v1h-1zM23,9h1v1h-1zM25,9h1v1h-1zM29,9h1v1h-1zM33,9h1v1h-1zM35,9h1v1h-1zM0,10h1v1h-1zM6,10h1v1h-1zM8,10h1v1h-1zM16,10h1v1h-1zM26,10h1v1h-1zM32,10h1v1h-1zM34,10h1v1h-1zM1,11h1v1h-1zM3,11h1v1h-1zM7,11h1v1h-1zM9,11h1v1h-1zM15,11h1v1h-1zM17,11h1v1h-1zM21,11h1v1h-1zM25,11h1v1h-1zM0,12h1v1h-1zM2,12h1v1h-1zM4,12h1v1h-1zM6,12h1v1h-1zM8,12h1v1h-1zM10,12h1v1h-1zM12,12h1v1h-1zM14,12h1v1h-1zM24,12h1v1h-1zM26,12h1v1h-1zM28,12h1v1h-1zM32,12h1v1h-1zM34,12h1v1h-1zM1,13h1v1h-1zM3,13h1v1h-1zM9,13h1v1h-1zM11,13h1v1h-1zM15,13h1v1h-1zM17,13h1v1h-1zM23,13h1v1h-1zM25,13h1v1h-1zM27,13h1v1h-1zM29,13h1v1h-1zM35,13h1v1h-1zM10,14h1v1h-1zM12,14h1v1h-1zM14,14h1v1h-1zM16,14h1v1h-1zM18,14h1v1h-1zM20,14h1v1h-1zM26,14h1v1h-1zM28,14h1v1h-1zM34,14h1v1h-1zM1,15h1v1h-1zM3,15h1v1h-1zM7,15h1v1h-1zM9,15h1v1h-1zM11,15h1v1h-1zM13,15h1v1h-1zM17,15h1v1h-1zM19,15h1v1h-1zM23,15h1v1h-1zM27,15h1v1h-1zM29,15h1v1h-1zM35,15h1v1h-1zM0,16h1v1h-1zM2,16h1v1h-1zM4,16h1v1h-1zM8,16h1v1h-1zM12,16h1v1h-1zM18,16h1v1h-1zM20,16h1v1h-1zM22,16h1v1h-1zM26,16h1v1h-1zM28,16h1v1h-1zM32,16h1v1h-1zM34,16h1v1h-1zM1,17h1v1h-1zM3,17h1v1h-1zM9,17h1v1h-1zM11,17h1v1h-1zM17,17h1v1h-1zM19,17h1v1h-1zM21,17h1v1h-1zM23,17h1v1h-1zM25,17h1v1h-1zM27,17h1v1h-1zM29,17h1v1h-1zM0,18h1v1h-1zM2,18h1v1h-1zM4,18h1v1h-1zM10,18h1v1h-1zM16,18h1v1h-1zM18,18h1v1h-1zM20,18h1v1h-1zM22,18h1v1h-1zM24,18h1v1h-1zM26,18h1v1h-1zM28,18h1v1h-1zM30,18h1v1h-1zM3,19h1v1h-1zM5,19h1v1h-1zM11,19h1v1h-1zM13,19h1v1h-1zM15,19h1v1h-1zM21,19h1v1h-1zM23,19h1v1h-1zM2,20h1v1h-1zM10,20h1v1h-1zM14,20h1v1h-1zM20,20h1v1h-1zM22,20h1v1h-1zM30,20h1v1h-1zM32,20h1v1h-1zM3,21h1v1h-1zM7,21h1v1h-1zM9,21h1v1h-1zM13,21h1v1h-1zM15,21h1v1h-1zM19,21h1v1h-1zM21,21h1v1h-1zM23,21h1v1h-1zM25,21h1v1h-1zM29,21h1v1h-1zM31,21h1v1h-1zM35,21h1v1h-1zM0,22h1v1h-1zM2,22h1v1h-1zM4,22h1v1h-1zM6,22h1v1h-1zM12,22h1v1h-1zM20,22h1v1h-1zM22,22h1v1h-1zM28,22h1v1h-1zM30,22h1v1h-1zM32,22h1v1h-1zM3,23h1v1h-1zM9,23h1v1h-1zM15,23h1v1h-1zM17,23h1v1h-1zM19,23h1v1h-1zM21,23h1v1h-1zM23,23h1v1h-1zM25,23h1v1h-1zM29,23h1v1h-1zM31,23h1v1h-1zM33,23h1v1h-1zM35,23h1v1h-1zM0,24h1v1h-1zM2,24h1v1h-1zM4,24h1v1h-1zM6,24h1v1h-1zM12,24h1v1h-1zM14,24h1v1h-1zM20,24h1v1h-1zM22,24h1v1h-1zM24,24h1v1h-1zM26,24h1v1h-1zM28,24h1v1h-1zM32,24h1v1h-1zM34,24h1v1h-1zM5,25h1v1h-1zM7,25h1v1h-1zM13,25h1v1h-1zM15,25h1v1h-1zM23,25h1v1h-1zM27,25h1v1h-1zM33,25h1v1h-1zM0,26h1v1h-1zM4,26h1v1h-1zM6,26h1v1h-1zM8,26h1v1h-1zM12,26h1v1h-1zM20,26h1v1h-1zM22,26h1v1h-1zM24,26h1v1h-1zM26,26h1v1h-1zM34,26h1v1h-1zM5,27h1v1h-1zM7,27h1v1h-1zM9,27h1v1h-1zM23,27h1v1h-1zM25,27h1v1h-1zM27,27h1v1h-1zM29,27h1v1h-1zM31,27h1v1h-1zM33,27h1v1h-1zM35,27h1v1h-1zM0,28h1v1h-1zM4,28h1v1h-1zM8,28h1v1h-1zM14,28h1v1h-1zM16,28h1v1h-1zM18,28h1v1h-1zM22,28h1v1h-1zM24,28h1v1h-1zM26,28h1v1h-1zM32,28h1v1h-1zM34,28h1v1h-1zM7,29h1v1h-1zM9,29h1v1h-1zM13,29h1v1h-1zM15,29h1v1h-1zM17,29h1v1h-1zM21,29h1v1h-1zM25,29h1v1h-1zM27,29h1v1h-1zM29,29h1v1h-1zM33,29h1v1h-1zM35,29h1v1h-1zM4,30h1v1h-1zM6,30h1v1h-1zM8,30h1v1h-1zM10,30h1v1h-1zM16,30h1v1h-1zM18,30h1v1h-1zM20,30h1v1h-1zM24,30h1v1h-1zM26,30h1v1h-1zM28,30h1v1h-1zM34,30h1v1h-1zM1,31h1v1h-1zM7,31h1v1h-1zM9,31h1v1h-1zM13,31h1v1h-1zM21,31h1v1h-1zM25,31h1v1h-1zM29,31h1v1h-1zM0,32h1v1h-1zM2,32h1v1h-1zM4,32h1v1h-1zM10,32h1v1h-1zM12,32h1v1h-1zM18,32h1v1h-1zM20,32h1v1h-1zM22,32h1v1h-1zM24,32h1v1h-1zM26,32h1v1h-1zM28,32h1v1h-1zM30,32h1v1h-1zM34,32h1v1h-1zM1,33h1v1h-1zM5,33h1v1h-1zM9,33h1v1h-1zM11,33h1v1h-1zM17,33h1v1h-1zM19,33h1v1h-1zM25,33h1v1h-1zM27,33h1v1h-1zM29,33h1v1h-1zM31,33h1v1h-1zM35,33h1v1h-1zM0,34h1v1h-1zM2,34h1v1h-1zM6,34h1v1h-1zM8,34h1v1h-1zM10,34h1v1h-1zM20,34h1v1h-1zM22,34h1v1h-1zM26,34h1v1h-1zM30,34h1v1h-1zM32,34h1v1h-1zM1,35h1v1h-1zM3,35h1v1h-1zM5,35h1v1h-1zM15,35h1v1h-1zM19,35h1v1h-1zM21,35h1v1h-1zM25,35h1v1h-1zM27,35h1v1h-1zM31,35h1v1h-1zM33,35h1v1h-1zM35,35h1v1h-1z" fill="#ff8c36"/></pattern></defs>
<rect x="0" y="600" width="1024" height="66" fill="#dcd8dc"/>
<rect x="1" y="602" width="1021" height="64" fill="url(#dith)"/>
<rect x="62" y="602" width="2" height="64" fill="#dcd8dc"/>
<rect x="146" y="602" width="2" height="64" fill="#dcd8dc"/>
<rect x="230" y="602" width="2" height="64" fill="#dcd8dc"/>
<rect x="315" y="602" width="2" height="64" fill="#dcd8dc"/>
<rect x="399" y="602" width="2" height="64" fill="#dcd8dc"/>
<rect x="483" y="602" width="2" height="64" fill="#dcd8dc"/>
<rect x="568" y="602" width="2" height="64" fill="#dcd8dc"/>
<rect x="652" y="602" width="2" height="64" fill="#dcd8dc"/>
<text x="6.0" y="614.5" font-size="8" fill="#1a1a50" text-anchor="start" font-weight="bold">Sensor</text>
<text x="6.0" y="626.0" font-size="8" fill="#1a1a50" text-anchor="start" font-weight="bold">MinWert</text>
<text x="6.0" y="637.5" font-size="8" fill="#1a1a50" text-anchor="start" font-weight="bold">MaxWert</text>
<text x="6.0" y="649.0" font-size="8" fill="#1a1a50" text-anchor="start" font-weight="bold">Durchschnitt</text>
<text x="6.0" y="660.5" font-size="8" fill="#1a1a50" text-anchor="start" font-weight="bold">04.10. 23:59</text>
<text x="68.0" y="614.5" font-size="8" fill="#1a1a50" text-anchor="start" font-weight="bold">Temp. 2m</text>
<text x="142.0" y="614.5" font-size="8" fill="#1a1a50" text-anchor="end" font-weight="bold">°C</text>
<text x="71.0" y="626.0" font-size="8" fill="#4a2a10" text-anchor="start">06:23</text>
<text x="142.0" y="626.0" font-size="8" fill="#4a2a10" text-anchor="end">6.7</text>
<text x="71.0" y="637.5" font-size="8" fill="#4a2a10" text-anchor="start">14:55</text>
<text x="142.0" y="637.5" font-size="8" fill="#4a2a10" text-anchor="end">18.4</text>
<text x="142.0" y="649.0" font-size="8" fill="#4a2a10" text-anchor="end">11.15</text>
<text x="69.0" y="660.5" font-size="8" fill="#4a2a10" text-anchor="start">F: 95 %</text>
<text x="142.0" y="660.5" font-size="8" fill="#1a1a50" text-anchor="end" font-weight="bold">8.6</text>
<text x="152.0" y="614.5" font-size="8" fill="#1a1a50" text-anchor="start" font-weight="bold">Temp. 5cm</text>
<text x="226.0" y="614.5" font-size="8" fill="#1a1a50" text-anchor="end" font-weight="bold">°C</text>
<text x="155.0" y="626.0" font-size="8" fill="#4a2a10" text-anchor="start">05:53</text>
<text x="226.0" y="626.0" font-size="8" fill="#4a2a10" text-anchor="end">4.4</text>
<text x="155.0" y="637.5" font-size="8" fill="#4a2a10" text-anchor="start">13:30</text>
<text x="226.0" y="637.5" font-size="8" fill="#4a2a10" text-anchor="end">31.1</text>
<text x="226.0" y="649.0" font-size="8" fill="#4a2a10" text-anchor="end">10.34</text>
<text x="226.0" y="660.5" font-size="8" fill="#1a1a50" text-anchor="end" font-weight="bold">7.2</text>
<text x="236.0" y="614.5" font-size="8" fill="#1a1a50" text-anchor="start" font-weight="bold">Feuchte A.</text>
<text x="311.0" y="614.5" font-size="8" fill="#1a1a50" text-anchor="end" font-weight="bold">%</text>
<text x="239.0" y="626.0" font-size="8" fill="#4a2a10" text-anchor="start">14:36</text>
<text x="311.0" y="626.0" font-size="8" fill="#4a2a10" text-anchor="end">62</text>
<text x="239.0" y="637.5" font-size="8" fill="#4a2a10" text-anchor="start">09:43</text>
<text x="311.0" y="637.5" font-size="8" fill="#4a2a10" text-anchor="end">98</text>
<text x="311.0" y="649.0" font-size="8" fill="#4a2a10" text-anchor="end">88</text>
<text x="237.0" y="660.5" font-size="8" fill="#4a2a10" text-anchor="start">8.17 g/m³</text>
<text x="311.0" y="660.5" font-size="8" fill="#1a1a50" text-anchor="end" font-weight="bold">95</text>
<text x="321.0" y="614.5" font-size="8" fill="#1a1a50" text-anchor="start" font-weight="bold">Regen</text>
<text x="395.0" y="614.5" font-size="8" fill="#1a1a50" text-anchor="end" font-weight="bold">l/m²</text>
<text x="324.0" y="637.5" font-size="8" fill="#4a2a10" text-anchor="start">11:33</text>
<text x="395.0" y="637.5" font-size="8" fill="#4a2a10" text-anchor="end">0.2</text>
<text x="320.0" y="649.0" font-size="8" fill="#4a2a10" text-anchor="start">Gesamt:</text>
<text x="395.0" y="649.0" font-size="8" fill="#4a2a10" text-anchor="end">0.2</text>
<text x="322.0" y="660.5" font-size="8" fill="#4a2a10" text-anchor="start">0.2 l/m²</text>
<text x="395.0" y="660.5" font-size="8" fill="#1a1a50" text-anchor="end" font-weight="bold">0.0</text>
<text x="405.0" y="614.5" font-size="8" fill="#1a1a50" text-anchor="start" font-weight="bold">Luftdruck</text>
<text x="479.0" y="614.5" font-size="8" fill="#1a1a50" text-anchor="end" font-weight="bold">hPa</text>
<text x="408.0" y="626.0" font-size="8" fill="#4a2a10" text-anchor="start">16:09</text>
<text x="479.0" y="626.0" font-size="8" fill="#4a2a10" text-anchor="end">1015.1</text>
<text x="408.0" y="637.5" font-size="8" fill="#4a2a10" text-anchor="start">00:00</text>
<text x="479.0" y="637.5" font-size="8" fill="#4a2a10" text-anchor="end">1022.2</text>
<text x="404.0" y="649.0" font-size="8" fill="#4a2a10" text-anchor="start">^1.0hPa/h</text>
<text x="479.0" y="649.0" font-size="8" fill="#4a2a10" text-anchor="end">1017.9</text>
<text x="406.0" y="660.5" font-size="8" fill="#4a2a10" text-anchor="start">bewolkt</text>
<text x="479.0" y="660.5" font-size="8" fill="#1a1a50" text-anchor="end" font-weight="bold">1015.6</text>
<text x="490.0" y="614.5" font-size="8" fill="#1a1a50" text-anchor="start" font-weight="bold">Sonnenschein</text>
<text x="563.0" y="614.5" font-size="8" fill="#1a1a50" text-anchor="end" font-weight="bold">min</text>
<text x="493.0" y="637.5" font-size="8" fill="#4a2a10" text-anchor="start">11:39</text>
<text x="563.0" y="637.5" font-size="8" fill="#4a2a10" text-anchor="end">1</text>
<text x="489.0" y="649.0" font-size="8" fill="#4a2a10" text-anchor="start">4:48 h</text>
<text x="563.0" y="649.0" font-size="8" fill="#4a2a10" text-anchor="end">0</text>
<text x="563.0" y="660.5" font-size="8" fill="#1a1a50" text-anchor="end" font-weight="bold">0</text>
<text x="574.0" y="614.5" font-size="8" fill="#1a1a50" text-anchor="start" font-weight="bold">Windböen</text>
<text x="648.0" y="614.5" font-size="8" fill="#1a1a50" text-anchor="end" font-weight="bold">km/h</text>
<text x="573.0" y="626.0" font-size="8" fill="#4a2a10" text-anchor="start">Ø 10 min.</text>
<text x="648.0" y="626.0" font-size="8" fill="#4a2a10" text-anchor="end">2.0</text>
<text x="577.0" y="637.5" font-size="8" fill="#4a2a10" text-anchor="start">14:06</text>
<text x="648.0" y="637.5" font-size="8" fill="#4a2a10" text-anchor="end">W-SW 24.1</text>
<text x="577.0" y="649.0" font-size="8" fill="#4a2a10" text-anchor="start">34.0 km</text>
<text x="648.0" y="649.0" font-size="8" fill="#4a2a10" text-anchor="end">1.4</text>
<text x="577.0" y="660.5" font-size="8" fill="#4a2a10" text-anchor="start">1 Bft N</text>
<text x="648.0" y="660.5" font-size="8" fill="#1a1a50" text-anchor="end" font-weight="bold">1.4</text>
<text x="658.0" y="614.5" font-size="8" fill="#1a1a50" text-anchor="start" font-weight="bold">Wind</text>
<text x="732.0" y="614.5" font-size="8" fill="#1a1a50" text-anchor="end" font-weight="bold">km/h</text>
<text x="657.0" y="626.0" font-size="8" fill="#4a2a10" text-anchor="start">Ø 10 min.</text>
<text x="732.0" y="626.0" font-size="8" fill="#4a2a10" text-anchor="end">0.5</text>
<text x="661.0" y="637.5" font-size="8" fill="#4a2a10" text-anchor="start">14:10</text>
<text x="732.0" y="637.5" font-size="8" fill="#4a2a10" text-anchor="end">W 7.9</text>
<text x="661.0" y="649.0" font-size="8" fill="#4a2a10" text-anchor="start">34.0 km</text>
<text x="732.0" y="649.0" font-size="8" fill="#4a2a10" text-anchor="end">0.4</text>
<text x="661.0" y="660.5" font-size="8" fill="#4a2a10" text-anchor="start">0 Bft NO</text>
<text x="732.0" y="660.5" font-size="8" fill="#1a1a50" text-anchor="end" font-weight="bold">0.0</text>
</svg></body></html>
